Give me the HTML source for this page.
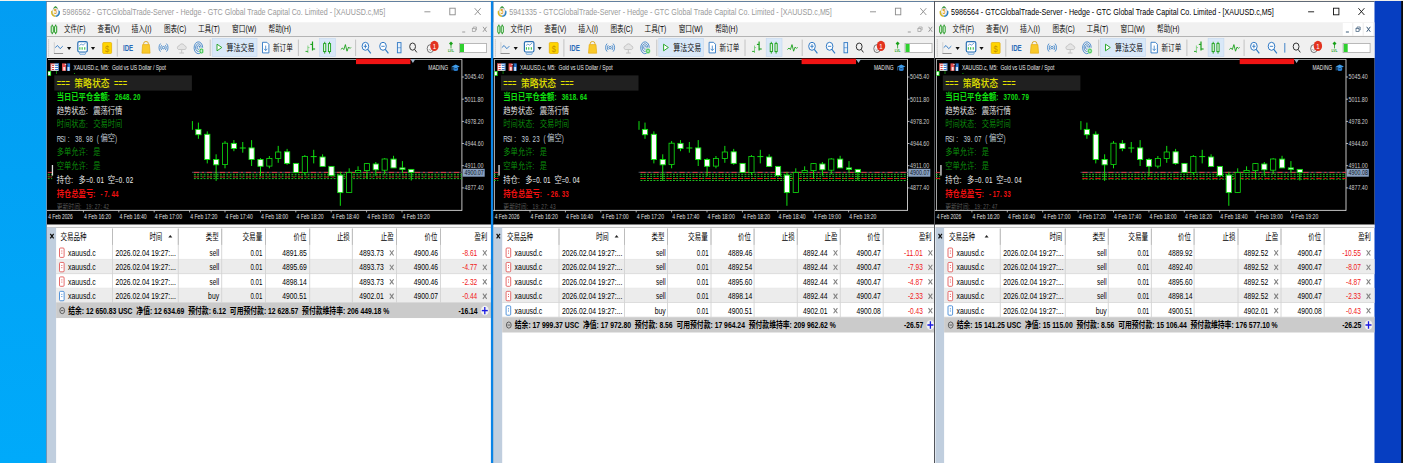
<!DOCTYPE html>
<html lang="zh-CN"><head><meta charset="utf-8"><title>MT5</title>
<style>
html,body{margin:0;padding:0;background:#0c41c4;overflow:hidden}
svg{display:block}
text{white-space:pre}
.u{font-family:"Liberation Sans","Noto Sans CJK SC",sans-serif}
.c{font-family:"Liberation Sans","Noto Sans CJK SC",sans-serif}
.p{font-family:"Liberation Sans","Noto Sans CJK SC",sans-serif}
</style></head><body>
<svg width="1403" height="463" viewBox="0 0 1403 463">
<defs><linearGradient id="dl" x1="0" y1="0" x2="0" y2="1"><stop offset="0" stop-color="#039df2"/><stop offset="1" stop-color="#00aafa"/></linearGradient></defs>
<rect x="0.00" y="0.00" width="60.00" height="463.00" fill="url(#dl)" />
<rect x="1370.00" y="0.00" width="40.00" height="463.00" fill="#063ec1" />
<rect x="1401.20" y="0.00" width="2.00" height="463.00" fill="#0c0c0c" />
<g clip-path="url(#c1)">
<clipPath id="c1"><rect x="45.4" y="0" width="445.60" height="463"/></clipPath>
<rect x="46.00" y="0.00" width="445.00" height="463.00" fill="#ffffff" />
<rect x="46.00" y="0.90" width="445.00" height="0.90" fill="#3d6288" />
<rect x="46.10" y="1.00" width="0.80" height="463.00" fill="#4a7aa4" />
<g transform="translate(51.00 5.90)"><path d="M2 3.4 C2.5 1.4 3.7 0.3 4.5 0 C5.3 0.3 6.5 1.4 7 3.4 L4.5 2.4Z" fill="#3f9a3f"/><path d="M0.2 5.2 C-0.5 8.8 1.6 11 4.4 11.2 L4.4 8.4 L2 4.4Z" fill="#d6ba1e"/><path d="M8.8 5.2 C9.5 8.8 7.4 11 4.6 11.2 L4.6 8.4 L7 4.4Z" fill="#1f80c8"/><ellipse cx="4.5" cy="5.9" rx="3" ry="3.7" fill="#fff" stroke="#a0a0a0" stroke-width="0.45"/><text class="u" x="0" y="0" font-size="6.6" font-weight="700" fill="#dc9c12" text-anchor="middle" transform="translate(4.5 8.25) scale(0.82 1)">5</text></g>
<text class="u" x="62.60" y="14.83" font-size="8.7" fill="#9a9a9a" textLength="322.60" lengthAdjust="spacingAndGlyphs" font-weight="350" >5986562 - GTCGlobalTrade-Server - Hedge - GTC Global Trade Capital Co. Limited - [XAUUSD.c,M5]</text>
<line x1="474.70" y1="8.20" x2="480.70" y2="15.00" stroke="#8a8a8a" stroke-width="0.9" />
<line x1="480.70" y1="8.20" x2="474.70" y2="15.00" stroke="#8a8a8a" stroke-width="0.9" />
<rect x="449.80" y="8.2" width="5.4" height="6.6" fill="none" stroke="#8a8a8a" stroke-width="0.9"/>
<line x1="424.40" y1="11.80" x2="430.40" y2="11.80" stroke="#8a8a8a" stroke-width="0.9" />
<rect x="47.00" y="22.30" width="444.00" height="14.00" fill="#f0f0f0" />
<rect x="47.00" y="36.00" width="444.00" height="1.00" fill="#b4b4b4" />
<line x1="52.25" y1="24.60" x2="52.25" y2="34.20" stroke="#109010" stroke-width="0.9" />
<rect x="51.20" y="26" width="2.1" height="6.8" rx="0.6" fill="#f4fff4" stroke="#109010" stroke-width="0.9"/>
<line x1="55.65" y1="24.60" x2="55.65" y2="34.20" stroke="#109010" stroke-width="0.9" />
<rect x="54.60" y="26" width="2.1" height="6.8" rx="0.6" fill="#f4fff4" stroke="#109010" stroke-width="0.9"/>
<text class="u" x="64.00" y="32.43" font-size="8.7" fill="#000" textLength="21.30" lengthAdjust="spacingAndGlyphs" font-weight="350" >文件(F)</text>
<text class="u" x="97.60" y="32.43" font-size="8.7" fill="#000" textLength="22.10" lengthAdjust="spacingAndGlyphs" font-weight="350" >查看(V)</text>
<text class="u" x="131.60" y="32.43" font-size="8.7" fill="#000" textLength="19.80" lengthAdjust="spacingAndGlyphs" font-weight="350" >插入(I)</text>
<text class="u" x="163.90" y="32.43" font-size="8.7" fill="#000" textLength="22.30" lengthAdjust="spacingAndGlyphs" font-weight="350" >图表(C)</text>
<text class="u" x="197.90" y="32.43" font-size="8.7" fill="#000" textLength="21.80" lengthAdjust="spacingAndGlyphs" font-weight="350" >工具(T)</text>
<text class="u" x="232.10" y="32.43" font-size="8.7" fill="#000" textLength="24.10" lengthAdjust="spacingAndGlyphs" font-weight="350" >窗口(W)</text>
<text class="u" x="268.60" y="32.43" font-size="8.7" fill="#000" textLength="22.40" lengthAdjust="spacingAndGlyphs" font-weight="350" >帮助(H)</text>
<line x1="462.20" y1="32.00" x2="465.20" y2="32.00" stroke="#9c9c9c" stroke-width="1" />
<rect x="472.30" y="28.4" width="3" height="3" fill="none" stroke="#9c9c9c" stroke-width="0.7"/>
<path d="M473.30 28.2 v-1.2 h3.2 v3 h-1" fill="none" stroke="#9c9c9c" stroke-width="0.7"/>
<line x1="483.00" y1="26.80" x2="486.60" y2="31.80" stroke="#9c9c9c" stroke-width="1" />
<line x1="486.60" y1="26.80" x2="483.00" y2="31.80" stroke="#9c9c9c" stroke-width="1" />
<rect x="47.00" y="37.00" width="444.00" height="21.00" fill="#f0f0f0" />
<rect x="48.30" y="39.50" width="0.80" height="0.90" fill="#9a9a9a" />
<rect x="48.30" y="41.50" width="0.80" height="0.90" fill="#9a9a9a" />
<rect x="48.30" y="43.50" width="0.80" height="0.90" fill="#9a9a9a" />
<rect x="48.30" y="45.50" width="0.80" height="0.90" fill="#9a9a9a" />
<rect x="48.30" y="47.50" width="0.80" height="0.90" fill="#9a9a9a" />
<rect x="48.30" y="49.50" width="0.80" height="0.90" fill="#9a9a9a" />
<rect x="48.30" y="51.50" width="0.80" height="0.90" fill="#9a9a9a" />
<rect x="48.30" y="53.50" width="0.80" height="0.90" fill="#9a9a9a" />
<rect x="48.30" y="55.50" width="0.80" height="0.90" fill="#9a9a9a" />
<line x1="54.30" y1="42.20" x2="54.30" y2="53.60" stroke="#cdcdcd" stroke-width="0.9" />
<line x1="54.00" y1="53.50" x2="63.10" y2="53.50" stroke="#858585" stroke-width="0.9" />
<path d="M55.20 47.6 l2.3 -2.1 l2.7 3.2 l2.6 -2.6" fill="none" stroke="#2f78c4" stroke-width="0.9"/>
<path d="M67.00 47.1 h4.2 l-2.1 2.9z" fill="#111"/>
<rect x="77.80" y="41.6" width="9.5" height="10.4" rx="1.5" fill="#fff" stroke="#2a70b4" stroke-width="1.2"/>
<path d="M79.40 45.6 l1.8 -1.5 l1.9 1 l2.6 -2.2" fill="none" stroke="#3a7cc0" stroke-width="0.7"/>
<rect x="79.30" y="47.20" width="1.10" height="2.50" fill="#38c048" />
<rect x="81.60" y="47.20" width="1.10" height="2.50" fill="#38c048" />
<rect x="84.20" y="47.20" width="1.10" height="2.50" fill="#38c048" />
<path d="M79.30 52.8 h6.5 l-0.7 1.6 h-5.1z" fill="#fff" stroke="#3a82c8" stroke-width="0.6"/>
<path d="M90.90 47.1 h4.2 l-2.1 2.9z" fill="#111"/>
<rect x="102.70" y="42.5" width="8.9" height="11" rx="1" fill="#ffd500" stroke="#e2aa00" stroke-width="0.7"/>
<text class="u" transform="translate(107.20 51.58) scale(0.8 1)" font-size="9.4" fill="#c49000" text-anchor="middle" font-weight="350" >$</text>
<line x1="117.30" y1="39.20" x2="117.30" y2="56.60" stroke="#bdbdbd" stroke-width="0.9" />
<text class="u" x="123.00" y="50.72" font-size="8.4" fill="#2a6ab8" textLength="10.20" lengthAdjust="spacingAndGlyphs" font-weight="700" >IDE</text>
<path d="M143.70 44.5 v-1.2 a2.3 1.8 0 0 1 4.6 0 v1.2" fill="none" stroke="#d79a00" stroke-width="0.8"/>
<path d="M142.60 44.6 h6.8 l0.7 8.6 h-8.2z" fill="#f9c92a" stroke="#e3a400" stroke-width="0.6"/>
<circle cx="163.50" cy="47.6" r="1.2" fill="none" stroke="#2f78c4" stroke-width="0.8"/>
<path d="M161.70 45.20 a2.25 3 0 0 0 0 4.80" fill="none" stroke="#2f78c4" stroke-width="0.8"/>
<path d="M165.30 45.20 a2.25 3 0 0 1 0 4.80" fill="none" stroke="#2f78c4" stroke-width="0.8"/>
<path d="M160.50 43.60 a3.75 5 0 0 0 0 8.00" fill="none" stroke="#2f78c4" stroke-width="0.8"/>
<path d="M166.50 43.60 a3.75 5 0 0 1 0 8.00" fill="none" stroke="#2f78c4" stroke-width="0.8"/>
<path d="M178.50 49.5 a2 2 0 0 1 0.8 -3.8 a2.8 3 0 0 1 5.2 0 a2 2 0 0 1 0.6 3.8z" fill="#e4e4e4" stroke="#b8b8b8" stroke-width="0.7"/>
<line x1="181.70" y1="50.00" x2="181.70" y2="52.80" stroke="#b8b8b8" stroke-width="0.8" />
<line x1="179.40" y1="53.00" x2="184.00" y2="53.00" stroke="#b8b8b8" stroke-width="0.8" />
<path d="M199.38 48.70 A1.30 1.79 0 1 1 199.70 47.70" fill="none" stroke="#2f78c4" stroke-width="0.8"/>
<path d="M200.50 50.20 A2.80 3.86 0 1 1 201.20 47.70" fill="none" stroke="#2f78c4" stroke-width="0.8"/>
<path d="M201.62 51.70 A4.30 5.93 0 1 1 202.70 47.70" fill="none" stroke="#2f78c4" stroke-width="0.8"/>
<ellipse cx="201.40" cy="51.00" rx="2.3" ry="2.8" fill="#2fbe3f" stroke="#fff" stroke-width="0.5"/>
<line x1="200.10" y1="51.00" x2="202.70" y2="51.00" stroke="#fff" stroke-width="0.7" />
<line x1="201.40" y1="49.40" x2="201.40" y2="52.60" stroke="#fff" stroke-width="0.7" />
<line x1="210.20" y1="39.60" x2="210.20" y2="56.00" stroke="#bdbdbd" stroke-width="0.9" />
<rect x="212.20" y="38.6" width="44.8" height="17.8" fill="#d9e8f8" stroke="#c2d8f0" stroke-width="0.6"/>
<path d="M217.00 44.2 v6.6 l4.8 -3.3z" fill="#fff" stroke="#18a018" stroke-width="0.9"/>
<text class="u" x="226.60" y="50.73" font-size="8.7" fill="#000" textLength="28.00" lengthAdjust="spacingAndGlyphs" font-weight="350" >算法交易</text>
<path d="M262.50 42.3 h4.4 l2 2 v8.6 h-6.4z" fill="#fff" stroke="#2f78c4" stroke-width="0.9"/>
<line x1="265.70" y1="45.60" x2="265.70" y2="50.40" stroke="#2f78c4" stroke-width="0.8" />
<path d="M264.10 48.8 l1.6 1.8 l1.6 -1.8" fill="none" stroke="#2f78c4" stroke-width="0.8"/>
<text class="u" x="273.00" y="50.73" font-size="8.7" fill="#000" textLength="19.80" lengthAdjust="spacingAndGlyphs" font-weight="350" >新订单</text>
<line x1="298.40" y1="39.60" x2="298.40" y2="56.00" stroke="#bdbdbd" stroke-width="0.9" />
<line x1="307.90" y1="45.50" x2="307.90" y2="53.00" stroke="#6fcc6f" stroke-width="0.8" />
<line x1="305.50" y1="51.40" x2="307.90" y2="51.40" stroke="#18a018" stroke-width="0.9" />
<line x1="307.90" y1="47.60" x2="309.50" y2="47.60" stroke="#6fcc6f" stroke-width="0.8" />
<line x1="312.50" y1="41.50" x2="312.50" y2="50.50" stroke="#18a018" stroke-width="1.2" />
<line x1="312.50" y1="49.00" x2="315.10" y2="49.00" stroke="#18a018" stroke-width="1.1" />
<line x1="310.30" y1="44.40" x2="312.50" y2="44.40" stroke="#18a018" stroke-width="1.1" />
<rect x="319.60" y="38.6" width="15.8" height="17.8" fill="#d9e8f8" stroke="#c2d8f0" stroke-width="0.6"/>
<line x1="324.70" y1="41.80" x2="324.70" y2="53.60" stroke="#18a018" stroke-width="0.9" />
<rect x="323.60" y="43.6" width="2.2" height="8" fill="#e6f6e6" stroke="#18a018" stroke-width="0.9"/>
<line x1="329.50" y1="41.80" x2="329.50" y2="53.60" stroke="#18a018" stroke-width="0.9" />
<rect x="328.40" y="43.6" width="2.2" height="8" fill="#e6f6e6" stroke="#18a018" stroke-width="0.9"/>
<path d="M340.80 49.5 l1.6 -1.5 l1.4 1.6 l1.6 -5 l1.6 6.6 l1.6 -4.2 l1.4 1.4 l1 -1" fill="none" stroke="#18a018" stroke-width="0.9"/>
<line x1="355.60" y1="39.60" x2="355.60" y2="56.00" stroke="#bdbdbd" stroke-width="0.9" />
<ellipse cx="365.40" cy="46.3" rx="3.3" ry="4" fill="#fff" stroke="#2f78c4" stroke-width="1"/>
<line x1="367.70" y1="49.30" x2="370.80" y2="53.30" stroke="#2f78c4" stroke-width="1.1" />
<line x1="363.70" y1="46.30" x2="367.10" y2="46.30" stroke="#2f78c4" stroke-width="0.9" />
<line x1="365.40" y1="44.20" x2="365.40" y2="48.40" stroke="#2f78c4" stroke-width="0.9" />
<ellipse cx="383.00" cy="46.3" rx="3.3" ry="4" fill="#fff" stroke="#2f78c4" stroke-width="1"/>
<line x1="385.30" y1="49.30" x2="388.40" y2="53.30" stroke="#2f78c4" stroke-width="1.1" />
<line x1="381.30" y1="46.30" x2="384.70" y2="46.30" stroke="#2f78c4" stroke-width="0.9" />
<rect x="397.40" y="42.6" width="3.6" height="10.2" fill="#e8f1fb" stroke="#2f78c4" stroke-width="0.9"/>
<line x1="397.40" y1="47.70" x2="401.00" y2="47.70" stroke="#2f78c4" stroke-width="0.6" />
<ellipse cx="412.60" cy="46.6" rx="2.9" ry="3.6" fill="none" stroke="#333" stroke-width="1"/>
<line x1="414.60" y1="49.40" x2="416.80" y2="52.40" stroke="#333" stroke-width="1" />
<ellipse cx="430.40" cy="48.6" rx="3.2" ry="4" fill="#f6f6f6" stroke="#555" stroke-width="0.8"/>
<path d="M428.80 49 l1.6 1.6 l1.8 -2.6" fill="none" stroke="#777" stroke-width="0.6"/>
<ellipse cx="434.40" cy="45.9" rx="4.2" ry="5.2" fill="#e2331f"/>
<text class="u" transform="translate(434.40 48.74) scale(0.8 1)" font-size="7.6" fill="#fff" text-anchor="middle" font-weight="350" >1</text>
<path d="M451.00 41.4 l2 2 l-2 2 l-2 -2z" fill="#18a018"/>
<line x1="451.00" y1="45.00" x2="451.00" y2="48.40" stroke="#18a018" stroke-width="0.8" />
<text class="u" transform="translate(451.00 52.30) scale(0.9 1)" font-size="3.6" fill="#18a018" text-anchor="middle" font-weight="700" >LVL</text>
<rect x="459.40" y="43.4" width="27" height="9.2" fill="#fff" stroke="#a9a9a9" stroke-width="0.8"/>
<rect x="460.00" y="44.00" width="4.00" height="8.00" fill="#2fd02f" />
<rect x="47.00" y="58.00" width="444.00" height="166.70" fill="#000" />
<rect x="48.00" y="59.05" width="413.90" height="0.90" fill="#a8a8a8" />
<line x1="461.90" y1="59.20" x2="461.90" y2="210.80" stroke="#d8d8d8" stroke-width="0.9" />
<line x1="47.00" y1="210.40" x2="461.90" y2="210.40" stroke="#d8d8d8" stroke-width="0.9" />
<line x1="461.90" y1="77.00" x2="463.90" y2="77.00" stroke="#d8d8d8" stroke-width="0.8" />
<text class="c" x="464.50" y="79.34" font-size="6.5" fill="#cccccc" textLength="19.10" lengthAdjust="spacingAndGlyphs" >5045.40</text>
<line x1="461.90" y1="99.20" x2="463.90" y2="99.20" stroke="#d8d8d8" stroke-width="0.8" />
<text class="c" x="464.50" y="101.54" font-size="6.5" fill="#cccccc" textLength="19.10" lengthAdjust="spacingAndGlyphs" >5011.80</text>
<line x1="461.90" y1="121.40" x2="463.90" y2="121.40" stroke="#d8d8d8" stroke-width="0.8" />
<text class="c" x="464.50" y="123.74" font-size="6.5" fill="#cccccc" textLength="19.10" lengthAdjust="spacingAndGlyphs" >4978.20</text>
<line x1="461.90" y1="143.50" x2="463.90" y2="143.50" stroke="#d8d8d8" stroke-width="0.8" />
<text class="c" x="464.50" y="145.84" font-size="6.5" fill="#cccccc" textLength="19.10" lengthAdjust="spacingAndGlyphs" >4944.60</text>
<line x1="461.90" y1="165.70" x2="463.90" y2="165.70" stroke="#d8d8d8" stroke-width="0.8" />
<text class="c" x="464.50" y="168.04" font-size="6.5" fill="#cccccc" textLength="19.10" lengthAdjust="spacingAndGlyphs" >4911.00</text>
<line x1="461.90" y1="187.90" x2="463.90" y2="187.90" stroke="#d8d8d8" stroke-width="0.8" />
<text class="c" x="464.50" y="190.24" font-size="6.5" fill="#cccccc" textLength="19.10" lengthAdjust="spacingAndGlyphs" >4877.40</text>
<text class="c" x="48.20" y="219.08" font-size="6.6" fill="#e0e0e0" textLength="24.60" lengthAdjust="spacingAndGlyphs" >4 Feb 2026</text>
<line x1="83.40" y1="210.40" x2="83.40" y2="212.40" stroke="#d8d8d8" stroke-width="0.8" />
<text class="c" x="84.00" y="219.08" font-size="6.6" fill="#e0e0e0" textLength="27.20" lengthAdjust="spacingAndGlyphs" >4 Feb 16:20</text>
<line x1="118.80" y1="210.40" x2="118.80" y2="212.40" stroke="#d8d8d8" stroke-width="0.8" />
<text class="c" x="119.40" y="219.08" font-size="6.6" fill="#e0e0e0" textLength="27.20" lengthAdjust="spacingAndGlyphs" >4 Feb 16:40</text>
<line x1="154.20" y1="210.40" x2="154.20" y2="212.40" stroke="#d8d8d8" stroke-width="0.8" />
<text class="c" x="154.80" y="219.08" font-size="6.6" fill="#e0e0e0" textLength="27.20" lengthAdjust="spacingAndGlyphs" >4 Feb 17:00</text>
<line x1="189.60" y1="210.40" x2="189.60" y2="212.40" stroke="#d8d8d8" stroke-width="0.8" />
<text class="c" x="190.20" y="219.08" font-size="6.6" fill="#e0e0e0" textLength="27.20" lengthAdjust="spacingAndGlyphs" >4 Feb 17:20</text>
<line x1="225.00" y1="210.40" x2="225.00" y2="212.40" stroke="#d8d8d8" stroke-width="0.8" />
<text class="c" x="225.60" y="219.08" font-size="6.6" fill="#e0e0e0" textLength="27.20" lengthAdjust="spacingAndGlyphs" >4 Feb 17:40</text>
<line x1="260.40" y1="210.40" x2="260.40" y2="212.40" stroke="#d8d8d8" stroke-width="0.8" />
<text class="c" x="261.00" y="219.08" font-size="6.6" fill="#e0e0e0" textLength="27.20" lengthAdjust="spacingAndGlyphs" >4 Feb 18:00</text>
<line x1="295.80" y1="210.40" x2="295.80" y2="212.40" stroke="#d8d8d8" stroke-width="0.8" />
<text class="c" x="296.40" y="219.08" font-size="6.6" fill="#e0e0e0" textLength="27.20" lengthAdjust="spacingAndGlyphs" >4 Feb 18:20</text>
<line x1="331.20" y1="210.40" x2="331.20" y2="212.40" stroke="#d8d8d8" stroke-width="0.8" />
<text class="c" x="331.80" y="219.08" font-size="6.6" fill="#e0e0e0" textLength="27.20" lengthAdjust="spacingAndGlyphs" >4 Feb 18:40</text>
<line x1="366.60" y1="210.40" x2="366.60" y2="212.40" stroke="#d8d8d8" stroke-width="0.8" />
<text class="c" x="367.20" y="219.08" font-size="6.6" fill="#e0e0e0" textLength="27.20" lengthAdjust="spacingAndGlyphs" >4 Feb 19:00</text>
<line x1="402.00" y1="210.40" x2="402.00" y2="212.40" stroke="#d8d8d8" stroke-width="0.8" />
<text class="c" x="402.60" y="219.08" font-size="6.6" fill="#e0e0e0" textLength="27.20" lengthAdjust="spacingAndGlyphs" >4 Feb 19:20</text>
<line x1="192.00" y1="172.40" x2="461.90" y2="172.40" stroke="#39434f" stroke-width="1.1" />
<line x1="193.90" y1="172.40" x2="461.90" y2="172.40" stroke="#e23c48" stroke-width="1" stroke-dasharray="5.2 2.7 2.2 2.9"/>
<line x1="193.90" y1="174.30" x2="461.90" y2="174.30" stroke="#22c022" stroke-width="1" stroke-dasharray="1.9 1.35"/>
<line x1="193.90" y1="176.20" x2="461.90" y2="176.20" stroke="#22c022" stroke-width="1" stroke-dasharray="1.9 1.35"/>
<line x1="193.90" y1="177.00" x2="461.90" y2="177.00" stroke="#a81c1c" stroke-width="1" stroke-dasharray="5.2 2.7 2.2 2.9"/>
<line x1="193.90" y1="178.60" x2="461.90" y2="178.60" stroke="#22c022" stroke-width="1" stroke-dasharray="1.9 1.35"/>
<line x1="47.80" y1="172.40" x2="52.20" y2="172.40" stroke="#e03c48" stroke-width="0.9" />
<line x1="47.80" y1="174.30" x2="52.20" y2="174.30" stroke="#22c022" stroke-width="0.9" stroke-dasharray="1.9 1.35"/>
<line x1="47.80" y1="176.20" x2="52.20" y2="176.20" stroke="#22c022" stroke-width="0.9" stroke-dasharray="1.9 1.35"/>
<line x1="47.80" y1="177.00" x2="52.20" y2="177.00" stroke="#a81c1c" stroke-width="0.9" />
<line x1="47.80" y1="178.60" x2="52.20" y2="178.60" stroke="#22c022" stroke-width="0.9" stroke-dasharray="1.9 1.35"/>
<rect x="51.80" y="165.00" width="1.30" height="10.60" fill="#e0e0e0" />
<line x1="192.40" y1="121.10" x2="192.40" y2="129.80" stroke="#10e010" stroke-width="1" />
<line x1="198.40" y1="122.60" x2="198.40" y2="138.80" stroke="#10e010" stroke-width="1" />
<rect x="195.80" y="129.40" width="5.2" height="5.30" fill="#fff" stroke="#10e010" stroke-width="0.9"/>
<line x1="207.27" y1="131.40" x2="207.27" y2="163.40" stroke="#10e010" stroke-width="1" />
<rect x="204.67" y="134.30" width="5.2" height="25.20" fill="#fff" stroke="#10e010" stroke-width="0.9"/>
<line x1="216.14" y1="154.30" x2="216.14" y2="180.90" stroke="#10e010" stroke-width="1" />
<rect x="213.54" y="159.50" width="5.2" height="5.30" fill="#fff" stroke="#10e010" stroke-width="0.9"/>
<line x1="225.01" y1="141.10" x2="225.01" y2="168.30" stroke="#10e010" stroke-width="1" />
<rect x="222.41" y="143.20" width="5.2" height="21.40" fill="#000" stroke="#10e010" stroke-width="0.8"/>
<line x1="233.88" y1="140.10" x2="233.88" y2="151.20" stroke="#10e010" stroke-width="1" />
<rect x="231.28" y="143.40" width="5.2" height="5.10" fill="#fff" stroke="#10e010" stroke-width="0.9"/>
<line x1="242.75" y1="142.00" x2="242.75" y2="152.70" stroke="#10e010" stroke-width="1" />
<line x1="239.75" y1="148.00" x2="245.75" y2="148.00" stroke="#10e010" stroke-width="1" />
<line x1="251.62" y1="140.10" x2="251.62" y2="166.00" stroke="#10e010" stroke-width="1" />
<rect x="249.02" y="147.90" width="5.2" height="11.60" fill="#fff" stroke="#10e010" stroke-width="0.9"/>
<line x1="260.49" y1="158.20" x2="260.49" y2="176.00" stroke="#10e010" stroke-width="1" />
<rect x="257.89" y="159.50" width="5.2" height="6.80" fill="#fff" stroke="#10e010" stroke-width="0.9"/>
<line x1="269.36" y1="156.00" x2="269.36" y2="168.30" stroke="#10e010" stroke-width="1" />
<rect x="266.76" y="158.40" width="5.2" height="7.70" fill="#000" stroke="#10e010" stroke-width="0.8"/>
<line x1="278.23" y1="145.90" x2="278.23" y2="162.80" stroke="#10e010" stroke-width="1" />
<rect x="275.63" y="152.00" width="5.2" height="6.40" fill="#000" stroke="#10e010" stroke-width="0.8"/>
<line x1="287.10" y1="148.90" x2="287.10" y2="164.80" stroke="#10e010" stroke-width="1" />
<rect x="284.50" y="151.80" width="5.2" height="11.60" fill="#fff" stroke="#10e010" stroke-width="0.9"/>
<line x1="295.97" y1="163.40" x2="295.97" y2="172.60" stroke="#10e010" stroke-width="1" />
<rect x="293.37" y="163.40" width="5.2" height="9.20" fill="#fff" stroke="#10e010" stroke-width="0.9"/>
<line x1="304.84" y1="155.10" x2="304.84" y2="175.10" stroke="#10e010" stroke-width="1" />
<rect x="302.24" y="156.40" width="5.2" height="16.00" fill="#000" stroke="#10e010" stroke-width="0.8"/>
<line x1="313.71" y1="149.80" x2="313.71" y2="163.40" stroke="#10e010" stroke-width="1" />
<line x1="310.71" y1="156.60" x2="316.71" y2="156.60" stroke="#10e010" stroke-width="1" />
<line x1="322.58" y1="154.30" x2="322.58" y2="166.40" stroke="#10e010" stroke-width="1" />
<rect x="319.98" y="157.00" width="5.2" height="9.40" fill="#fff" stroke="#10e010" stroke-width="0.9"/>
<line x1="331.45" y1="166.40" x2="331.45" y2="175.60" stroke="#10e010" stroke-width="1" />
<rect x="328.85" y="166.40" width="5.2" height="9.20" fill="#fff" stroke="#10e010" stroke-width="0.9"/>
<line x1="340.32" y1="171.80" x2="340.32" y2="205.80" stroke="#10e010" stroke-width="1" />
<rect x="337.72" y="175.10" width="5.2" height="17.50" fill="#fff" stroke="#10e010" stroke-width="0.9"/>
<line x1="349.19" y1="168.30" x2="349.19" y2="192.60" stroke="#10e010" stroke-width="1" />
<rect x="346.59" y="172.40" width="5.2" height="20.00" fill="#000" stroke="#10e010" stroke-width="0.8"/>
<line x1="358.06" y1="166.30" x2="358.06" y2="172.70" stroke="#10e010" stroke-width="1" />
<rect x="355.46" y="170.40" width="5.2" height="2.10" fill="#000" stroke="#10e010" stroke-width="0.8"/>
<line x1="366.93" y1="163.00" x2="366.93" y2="178.60" stroke="#10e010" stroke-width="1" />
<rect x="364.33" y="163.60" width="5.2" height="7.00" fill="#000" stroke="#10e010" stroke-width="0.8"/>
<line x1="375.80" y1="162.00" x2="375.80" y2="175.70" stroke="#10e010" stroke-width="1" />
<rect x="373.20" y="164.00" width="5.2" height="5.80" fill="#fff" stroke="#10e010" stroke-width="0.9"/>
<line x1="384.67" y1="158.20" x2="384.67" y2="174.30" stroke="#10e010" stroke-width="1" />
<rect x="382.07" y="159.00" width="5.2" height="11.20" fill="#000" stroke="#10e010" stroke-width="0.8"/>
<line x1="393.54" y1="155.80" x2="393.54" y2="167.90" stroke="#10e010" stroke-width="1" />
<rect x="390.94" y="159.10" width="5.2" height="8.80" fill="#fff" stroke="#10e010" stroke-width="0.9"/>
<line x1="402.41" y1="161.10" x2="402.41" y2="173.10" stroke="#10e010" stroke-width="1" />
<rect x="399.81" y="167.90" width="5.2" height="1.50" fill="#fff" stroke="#10e010" stroke-width="0.9"/>
<line x1="411.28" y1="169.40" x2="411.28" y2="180.50" stroke="#10e010" stroke-width="1" />
<rect x="408.68" y="169.40" width="5.2" height="3.00" fill="#fff" stroke="#10e010" stroke-width="0.9"/>
<rect x="462.70" y="168.80" width="22.00" height="7.90" fill="#8aa2c2" />
<text class="c" x="464.50" y="175.08" font-size="6.6" fill="#0c141e" textLength="19.30" lengthAdjust="spacingAndGlyphs" >4900.07</text>
<rect x="356.00" y="58.70" width="54.40" height="5.40" fill="#f01414" />
<path d="M410.50 59.2 h4.8 l-2.4 3.8z" fill="#9fb2c6"/>
<text class="c" x="428.30" y="69.80" font-size="6.4" fill="#e8e8e8" textLength="19.80" lengthAdjust="spacingAndGlyphs" >MADING</text>
<path d="M451.70 66.4 l4 -2 l4 2 l-4 2z" fill="#3f9be8"/>
<path d="M453.30 67.6 v2.2 a2.4 1.2 0 0 0 4.8 0 v-2.2 l-2.4 1.2z" fill="#2b7fd0"/>
<line x1="452.10" y1="66.60" x2="452.10" y2="70.40" stroke="#3f9be8" stroke-width="0.6" />
<rect x="50.50" y="63.40" width="8.30" height="7.40" fill="#fff" />
<rect x="50.50" y="63.40" width="0.70" height="7.40" fill="#b42020" />
<rect x="58.10" y="63.40" width="0.70" height="7.40" fill="#1d5fb0" />
<rect x="50.50" y="63.40" width="4.10" height="0.80" fill="#b42020" />
<rect x="54.60" y="63.40" width="4.20" height="0.80" fill="#1d5fb0" />
<rect x="52.00" y="64.90" width="2.20" height="1.00" fill="#e03c3c" />
<rect x="55.10" y="64.90" width="2.90" height="1.00" fill="#2f7ad0" />
<rect x="52.00" y="66.95" width="2.20" height="1.00" fill="#e03c3c" />
<rect x="55.10" y="66.95" width="2.90" height="1.00" fill="#2f7ad0" />
<rect x="52.00" y="69.00" width="2.20" height="1.00" fill="#e03c3c" />
<rect x="55.10" y="69.00" width="2.90" height="1.00" fill="#2f7ad0" />
<rect x="62.00" y="63.40" width="4.00" height="7.50" fill="#e25050" />
<rect x="63.20" y="67.00" width="2.00" height="3.50" fill="#fbdcdc" />
<rect x="66.80" y="63.40" width="3.30" height="7.50" fill="#2a7ad4" />
<rect x="67.60" y="67.00" width="1.90" height="3.90" fill="#cfe4fa" />
<rect x="64.80" y="64.10" width="2.60" height="0.90" fill="#e4e4e4" />
<rect x="66.20" y="63.40" width="1.40" height="3.20" fill="#0c1c3c" />
<text class="c" x="73.40" y="69.78" font-size="6.6" fill="#e8e8e8" textLength="92.60" lengthAdjust="spacingAndGlyphs" >XAUUSD.c, M5:  Gold vs US Dollar / Spot</text>
<rect x="47.90" y="71.00" width="3.20" height="4.90" fill="#16e016" />
<rect x="48.20" y="71.80" width="2.00" height="3.30" fill="#fff" />
<line x1="56.50" y1="71.00" x2="56.50" y2="74.00" stroke="#0a9a0a" stroke-width="0.8" />
<rect x="74.00" y="73.00" width="0.90" height="0.90" fill="#10c010" />
<rect x="54.30" y="75.40" width="137.60" height="15.20" fill="#202020" />
<text class="p" transform="translate(56.70 87.14) scale(0.63 1)" x="0.00 6.98 13.97" font-size="11.77" fill="#e0e000" font-weight="400">===</text>
<text class="p" x="74.30" y="86.72" font-size="10.6" fill="#e0e000" textLength="35.20" lengthAdjust="spacingAndGlyphs" font-weight="500" >策略状态</text>
<text class="p" transform="translate(113.90 87.14) scale(0.63 1)" x="0.00 6.98 13.97" font-size="11.77" fill="#e0e000" font-weight="400">===</text>
<text class="p" x="56.70" y="99.77" font-size="8.8" fill="#10e010" textLength="51.10" lengthAdjust="spacingAndGlyphs" font-weight="700" >当日已平仓金额</text>
<text class="p" transform="translate(107.80 100.12) scale(0.63 1)" x="0.00" font-size="9.77" fill="#10e010" font-weight="700">:</text>
<text class="p" transform="translate(115.10 100.12) scale(0.63 1)" x="0.00 5.79 11.59 17.38 23.17 28.97 34.76" font-size="9.77" fill="#10e010" font-weight="700">2648.20</text>
<text class="p" x="56.70" y="113.61" font-size="8.8" fill="#f4f4f4" textLength="29.20" lengthAdjust="spacingAndGlyphs" font-weight="350" >趋势状态</text>
<text class="p" transform="translate(85.90 113.96) scale(0.63 1)" x="0.00" font-size="9.77" fill="#f4f4f4">:</text>
<text class="p" x="93.20" y="113.61" font-size="8.8" fill="#f4f4f4" textLength="29.20" lengthAdjust="spacingAndGlyphs" font-weight="350" >震荡行情</text>
<text class="p" x="56.70" y="127.45" font-size="8.8" fill="#0c960c" textLength="29.20" lengthAdjust="spacingAndGlyphs" font-weight="350" >时间状态</text>
<text class="p" transform="translate(85.90 127.80) scale(0.63 1)" x="0.00" font-size="9.77" fill="#0c960c">:</text>
<text class="p" x="93.20" y="127.45" font-size="8.8" fill="#0c960c" textLength="29.20" lengthAdjust="spacingAndGlyphs" font-weight="350" >交易时间</text>
<text class="p" transform="translate(56.70 141.64) scale(0.63 1)" x="0.00 5.79 11.59 17.38" font-size="9.77" fill="#c4d0dc">RSI:</text>
<text class="p" transform="translate(74.95 141.64) scale(0.63 1)" x="0.00 5.79 11.59 17.38 23.17" font-size="9.77" fill="#c4d0dc">38.98</text>
<text class="p" transform="translate(96.85 141.64) scale(0.63 1)" x="0.00" font-size="9.77" fill="#c4d0dc">(</text>
<text class="p" x="100.50" y="141.29" font-size="8.8" fill="#c4d0dc" textLength="14.60" lengthAdjust="spacingAndGlyphs" font-weight="350" >偏空</text>
<text class="p" transform="translate(115.10 141.64) scale(0.63 1)" x="0.00" font-size="9.77" fill="#c4d0dc">)</text>
<text class="p" x="56.70" y="155.13" font-size="8.8" fill="#0c960c" textLength="29.20" lengthAdjust="spacingAndGlyphs" font-weight="350" >多单允许</text>
<text class="p" transform="translate(85.90 155.48) scale(0.63 1)" x="0.00" font-size="9.77" fill="#0c960c">:</text>
<text class="p" x="93.20" y="155.13" font-size="8.8" fill="#0c960c" textLength="7.30" lengthAdjust="spacingAndGlyphs" font-weight="350" >是</text>
<text class="p" x="56.70" y="168.97" font-size="8.8" fill="#0c960c" textLength="29.20" lengthAdjust="spacingAndGlyphs" font-weight="350" >空单允许</text>
<text class="p" transform="translate(85.90 169.32) scale(0.63 1)" x="0.00" font-size="9.77" fill="#0c960c">:</text>
<text class="p" x="93.20" y="168.97" font-size="8.8" fill="#0c960c" textLength="7.30" lengthAdjust="spacingAndGlyphs" font-weight="350" >是</text>
<text class="p" x="56.70" y="182.81" font-size="8.8" fill="#f4f4f4" textLength="14.60" lengthAdjust="spacingAndGlyphs" font-weight="350" >持仓</text>
<text class="p" transform="translate(71.30 183.16) scale(0.63 1)" x="0.00" font-size="9.77" fill="#f4f4f4">:</text>
<text class="p" x="78.60" y="182.81" font-size="8.8" fill="#f4f4f4" textLength="7.30" lengthAdjust="spacingAndGlyphs" font-weight="350" >多</text>
<text class="p" transform="translate(85.90 183.16) scale(0.63 1)" x="0.00 5.79 11.59 17.38 23.17" font-size="9.77" fill="#f4f4f4">=0.01</text>
<text class="p" x="107.80" y="182.81" font-size="8.8" fill="#f4f4f4" textLength="7.30" lengthAdjust="spacingAndGlyphs" font-weight="350" >空</text>
<text class="p" transform="translate(115.10 183.16) scale(0.63 1)" x="0.00 5.79 11.59 17.38 23.17" font-size="9.77" fill="#f4f4f4">=0.02</text>
<text class="p" x="56.70" y="196.65" font-size="8.8" fill="#f01010" textLength="36.50" lengthAdjust="spacingAndGlyphs" font-weight="700" >持仓总盈亏</text>
<text class="p" transform="translate(93.20 197.00) scale(0.63 1)" x="0.00" font-size="9.77" fill="#f01010" font-weight="700">:</text>
<text class="p" transform="translate(100.50 197.00) scale(0.63 1)" x="0.00 5.79 11.59 17.38 23.17" font-size="9.77" fill="#f01010" font-weight="700">-7.44</text>
<text class="p" x="56.70" y="208.57" font-size="6.8" fill="#5c5c5c" textLength="23.36" lengthAdjust="spacingAndGlyphs" font-weight="350" >更新时间</text>
<text class="p" transform="translate(80.06 208.84) scale(0.63 1)" x="0.00" font-size="7.55" fill="#5c5c5c">:</text>
<text class="p" transform="translate(85.90 208.84) scale(0.63 1)" x="0.00 4.63 9.27 13.90 18.54 23.17 27.81 32.44" font-size="7.55" fill="#5c5c5c">19:27:42</text>
<rect x="47.00" y="224.70" width="444.00" height="3.00" fill="#f7f7f7" />
<rect x="47.00" y="227.10" width="444.00" height="0.80" fill="#b6b6b6" />
<rect x="47.00" y="227.60" width="9.10" height="235.40" fill="#c0cede" />
<line x1="50.25" y1="233.90" x2="53.65" y2="238.30" stroke="#111" stroke-width="1.2" />
<line x1="53.65" y1="233.90" x2="50.25" y2="238.30" stroke="#111" stroke-width="1.2" />
<rect x="56.10" y="258.95" width="434.90" height="0.70" fill="#d4d4d4" />
<rect x="56.10" y="259.35" width="434.90" height="14.45" fill="#ececec" />
<rect x="56.10" y="273.40" width="434.90" height="0.70" fill="#d4d4d4" />
<rect x="56.10" y="287.85" width="434.90" height="0.70" fill="#d4d4d4" />
<rect x="56.10" y="288.25" width="434.90" height="14.45" fill="#ececec" />
<rect x="56.10" y="302.30" width="434.90" height="0.70" fill="#d4d4d4" />
<rect x="56.10" y="302.80" width="434.90" height="15.25" fill="#cbcbcb" />
<line x1="112.50" y1="228.60" x2="112.50" y2="302.70" stroke="#d4d4d4" stroke-width="0.9" />
<line x1="112.50" y1="228.60" x2="112.50" y2="244.90" stroke="#b9b9b9" stroke-width="0.9" />
<line x1="178.30" y1="228.60" x2="178.30" y2="302.70" stroke="#d4d4d4" stroke-width="0.9" />
<line x1="178.30" y1="228.60" x2="178.30" y2="244.90" stroke="#b9b9b9" stroke-width="0.9" />
<line x1="221.70" y1="228.60" x2="221.70" y2="302.70" stroke="#d4d4d4" stroke-width="0.9" />
<line x1="221.70" y1="228.60" x2="221.70" y2="244.90" stroke="#b9b9b9" stroke-width="0.9" />
<line x1="265.50" y1="228.60" x2="265.50" y2="302.70" stroke="#d4d4d4" stroke-width="0.9" />
<line x1="265.50" y1="228.60" x2="265.50" y2="244.90" stroke="#b9b9b9" stroke-width="0.9" />
<line x1="309.70" y1="228.60" x2="309.70" y2="302.70" stroke="#d4d4d4" stroke-width="0.9" />
<line x1="309.70" y1="228.60" x2="309.70" y2="244.90" stroke="#b9b9b9" stroke-width="0.9" />
<line x1="352.40" y1="228.60" x2="352.40" y2="302.70" stroke="#d4d4d4" stroke-width="0.9" />
<line x1="352.40" y1="228.60" x2="352.40" y2="244.90" stroke="#b9b9b9" stroke-width="0.9" />
<line x1="396.50" y1="228.60" x2="396.50" y2="302.70" stroke="#d4d4d4" stroke-width="0.9" />
<line x1="396.50" y1="228.60" x2="396.50" y2="244.90" stroke="#b9b9b9" stroke-width="0.9" />
<line x1="440.50" y1="228.60" x2="440.50" y2="302.70" stroke="#d4d4d4" stroke-width="0.9" />
<line x1="440.50" y1="228.60" x2="440.50" y2="244.90" stroke="#b9b9b9" stroke-width="0.9" />
<text class="u" x="60.40" y="239.53" font-size="8.7" fill="#000" textLength="26.00" lengthAdjust="spacingAndGlyphs" font-weight="400" >交易品种</text>
<path d="M168.30 237.6 h4 l-2 -2.6z" fill="#222"/>
<text class="u" x="162.30" y="239.53" font-size="8.7" fill="#000" textLength="12.90" lengthAdjust="spacingAndGlyphs" text-anchor="end" font-weight="400" >时间</text>
<text class="u" x="218.70" y="239.53" font-size="8.7" fill="#000" textLength="12.90" lengthAdjust="spacingAndGlyphs" text-anchor="end" font-weight="400" >类型</text>
<text class="u" x="262.30" y="239.53" font-size="8.7" fill="#000" textLength="19.90" lengthAdjust="spacingAndGlyphs" text-anchor="end" font-weight="400" >交易量</text>
<text class="u" x="306.50" y="239.53" font-size="8.7" fill="#000" textLength="12.90" lengthAdjust="spacingAndGlyphs" text-anchor="end" font-weight="400" >价位</text>
<text class="u" x="349.80" y="239.53" font-size="8.7" fill="#000" textLength="12.90" lengthAdjust="spacingAndGlyphs" text-anchor="end" font-weight="400" >止损</text>
<text class="u" x="393.60" y="239.53" font-size="8.7" fill="#000" textLength="12.90" lengthAdjust="spacingAndGlyphs" text-anchor="end" font-weight="400" >止盈</text>
<text class="u" x="437.50" y="239.53" font-size="8.7" fill="#000" textLength="12.90" lengthAdjust="spacingAndGlyphs" text-anchor="end" font-weight="400" >价位</text>
<text class="u" x="487.20" y="239.53" font-size="8.7" fill="#000" textLength="12.60" lengthAdjust="spacingAndGlyphs" text-anchor="end" font-weight="400" >盈利</text>
<rect x="59.50" y="248.00" width="4.6" height="9.4" rx="1" fill="#fff" stroke="#e04848" stroke-width="0.8"/>
<rect x="61.40" y="250.50" width="0.90" height="1.00" fill="#e04848" />
<rect x="61.40" y="252.70" width="0.90" height="1.00" fill="#e04848" />
<text class="u" x="68.00" y="256.03" font-size="8.7" fill="#000" textLength="27.60" lengthAdjust="spacingAndGlyphs" font-weight="400" >xauusd.c</text>
<text class="u" x="115.50" y="256.03" font-size="8.7" fill="#000" textLength="60.30" lengthAdjust="spacingAndGlyphs" font-weight="400" >2026.02.04 19:27:...</text>
<text class="u" x="219.10" y="256.03" font-size="8.7" fill="#000" textLength="9.60" lengthAdjust="spacingAndGlyphs" text-anchor="end" font-weight="400" >sell</text>
<text class="u" x="262.30" y="256.03" font-size="8.7" fill="#000" textLength="11.80" lengthAdjust="spacingAndGlyphs" text-anchor="end" font-weight="400" >0.01</text>
<text class="u" x="306.70" y="256.03" font-size="8.7" fill="#000" textLength="24.40" lengthAdjust="spacingAndGlyphs" text-anchor="end" font-weight="400" >4891.85</text>
<text class="u" x="383.70" y="256.03" font-size="8.7" fill="#000" textLength="24.40" lengthAdjust="spacingAndGlyphs" text-anchor="end" font-weight="400" >4893.73</text>
<line x1="389.80" y1="250.30" x2="393.60" y2="255.50" stroke="#808080" stroke-width="1.05" />
<line x1="393.60" y1="250.30" x2="389.80" y2="255.50" stroke="#808080" stroke-width="1.05" />
<text class="u" x="438.10" y="256.03" font-size="8.7" fill="#000" textLength="24.40" lengthAdjust="spacingAndGlyphs" text-anchor="end" font-weight="400" >4900.46</text>
<text class="u" x="477.20" y="256.03" font-size="8.7" fill="#f01818" textLength="14.90" lengthAdjust="spacingAndGlyphs" text-anchor="end" font-weight="400" >-8.61</text>
<line x1="482.90" y1="250.30" x2="486.70" y2="255.50" stroke="#808080" stroke-width="1.05" />
<line x1="486.70" y1="250.30" x2="482.90" y2="255.50" stroke="#808080" stroke-width="1.05" />
<rect x="59.50" y="262.45" width="4.6" height="9.4" rx="1" fill="#fff" stroke="#e04848" stroke-width="0.8"/>
<rect x="61.40" y="264.95" width="0.90" height="1.00" fill="#e04848" />
<rect x="61.40" y="267.15" width="0.90" height="1.00" fill="#e04848" />
<text class="u" x="68.00" y="270.48" font-size="8.7" fill="#000" textLength="27.60" lengthAdjust="spacingAndGlyphs" font-weight="400" >xauusd.c</text>
<text class="u" x="115.50" y="270.48" font-size="8.7" fill="#000" textLength="60.30" lengthAdjust="spacingAndGlyphs" font-weight="400" >2026.02.04 19:27:...</text>
<text class="u" x="219.10" y="270.48" font-size="8.7" fill="#000" textLength="9.60" lengthAdjust="spacingAndGlyphs" text-anchor="end" font-weight="400" >sell</text>
<text class="u" x="262.30" y="270.48" font-size="8.7" fill="#000" textLength="11.80" lengthAdjust="spacingAndGlyphs" text-anchor="end" font-weight="400" >0.01</text>
<text class="u" x="306.70" y="270.48" font-size="8.7" fill="#000" textLength="24.40" lengthAdjust="spacingAndGlyphs" text-anchor="end" font-weight="400" >4895.69</text>
<text class="u" x="383.70" y="270.48" font-size="8.7" fill="#000" textLength="24.40" lengthAdjust="spacingAndGlyphs" text-anchor="end" font-weight="400" >4893.73</text>
<line x1="389.80" y1="264.75" x2="393.60" y2="269.95" stroke="#808080" stroke-width="1.05" />
<line x1="393.60" y1="264.75" x2="389.80" y2="269.95" stroke="#808080" stroke-width="1.05" />
<text class="u" x="438.10" y="270.48" font-size="8.7" fill="#000" textLength="24.40" lengthAdjust="spacingAndGlyphs" text-anchor="end" font-weight="400" >4900.46</text>
<text class="u" x="477.20" y="270.48" font-size="8.7" fill="#f01818" textLength="14.90" lengthAdjust="spacingAndGlyphs" text-anchor="end" font-weight="400" >-4.77</text>
<line x1="482.90" y1="264.75" x2="486.70" y2="269.95" stroke="#808080" stroke-width="1.05" />
<line x1="486.70" y1="264.75" x2="482.90" y2="269.95" stroke="#808080" stroke-width="1.05" />
<rect x="59.50" y="276.90" width="4.6" height="9.4" rx="1" fill="#fff" stroke="#e04848" stroke-width="0.8"/>
<rect x="61.40" y="279.40" width="0.90" height="1.00" fill="#e04848" />
<rect x="61.40" y="281.60" width="0.90" height="1.00" fill="#e04848" />
<text class="u" x="68.00" y="284.93" font-size="8.7" fill="#000" textLength="27.60" lengthAdjust="spacingAndGlyphs" font-weight="400" >xauusd.c</text>
<text class="u" x="115.50" y="284.93" font-size="8.7" fill="#000" textLength="60.30" lengthAdjust="spacingAndGlyphs" font-weight="400" >2026.02.04 19:27:...</text>
<text class="u" x="219.10" y="284.93" font-size="8.7" fill="#000" textLength="9.60" lengthAdjust="spacingAndGlyphs" text-anchor="end" font-weight="400" >sell</text>
<text class="u" x="262.30" y="284.93" font-size="8.7" fill="#000" textLength="11.80" lengthAdjust="spacingAndGlyphs" text-anchor="end" font-weight="400" >0.01</text>
<text class="u" x="306.70" y="284.93" font-size="8.7" fill="#000" textLength="24.40" lengthAdjust="spacingAndGlyphs" text-anchor="end" font-weight="400" >4898.14</text>
<text class="u" x="383.70" y="284.93" font-size="8.7" fill="#000" textLength="24.40" lengthAdjust="spacingAndGlyphs" text-anchor="end" font-weight="400" >4893.73</text>
<line x1="389.80" y1="279.20" x2="393.60" y2="284.40" stroke="#808080" stroke-width="1.05" />
<line x1="393.60" y1="279.20" x2="389.80" y2="284.40" stroke="#808080" stroke-width="1.05" />
<text class="u" x="438.10" y="284.93" font-size="8.7" fill="#000" textLength="24.40" lengthAdjust="spacingAndGlyphs" text-anchor="end" font-weight="400" >4900.46</text>
<text class="u" x="477.20" y="284.93" font-size="8.7" fill="#f01818" textLength="14.90" lengthAdjust="spacingAndGlyphs" text-anchor="end" font-weight="400" >-2.32</text>
<line x1="482.90" y1="279.20" x2="486.70" y2="284.40" stroke="#808080" stroke-width="1.05" />
<line x1="486.70" y1="279.20" x2="482.90" y2="284.40" stroke="#808080" stroke-width="1.05" />
<rect x="59.50" y="291.35" width="4.6" height="9.4" rx="1" fill="#fff" stroke="#2c7bd0" stroke-width="0.8"/>
<rect x="61.40" y="293.85" width="0.90" height="1.00" fill="#2c7bd0" />
<rect x="61.40" y="296.05" width="0.90" height="1.00" fill="#2c7bd0" />
<text class="u" x="68.00" y="299.38" font-size="8.7" fill="#000" textLength="27.60" lengthAdjust="spacingAndGlyphs" font-weight="400" >xauusd.c</text>
<text class="u" x="115.50" y="299.38" font-size="8.7" fill="#000" textLength="60.30" lengthAdjust="spacingAndGlyphs" font-weight="400" >2026.02.04 19:27:...</text>
<text class="u" x="219.10" y="299.38" font-size="8.7" fill="#000" textLength="11.00" lengthAdjust="spacingAndGlyphs" text-anchor="end" font-weight="400" >buy</text>
<text class="u" x="262.30" y="299.38" font-size="8.7" fill="#000" textLength="11.80" lengthAdjust="spacingAndGlyphs" text-anchor="end" font-weight="400" >0.01</text>
<text class="u" x="306.70" y="299.38" font-size="8.7" fill="#000" textLength="24.40" lengthAdjust="spacingAndGlyphs" text-anchor="end" font-weight="400" >4900.51</text>
<text class="u" x="383.70" y="299.38" font-size="8.7" fill="#000" textLength="24.40" lengthAdjust="spacingAndGlyphs" text-anchor="end" font-weight="400" >4902.01</text>
<line x1="389.80" y1="293.65" x2="393.60" y2="298.85" stroke="#808080" stroke-width="1.05" />
<line x1="393.60" y1="293.65" x2="389.80" y2="298.85" stroke="#808080" stroke-width="1.05" />
<text class="u" x="438.10" y="299.38" font-size="8.7" fill="#000" textLength="24.40" lengthAdjust="spacingAndGlyphs" text-anchor="end" font-weight="400" >4900.07</text>
<text class="u" x="477.20" y="299.38" font-size="8.7" fill="#f01818" textLength="14.90" lengthAdjust="spacingAndGlyphs" text-anchor="end" font-weight="400" >-0.44</text>
<line x1="482.90" y1="293.65" x2="486.70" y2="298.85" stroke="#808080" stroke-width="1.05" />
<line x1="486.70" y1="293.65" x2="482.90" y2="298.85" stroke="#808080" stroke-width="1.05" />
<ellipse cx="62.20" cy="310.60" rx="2.4" ry="3.1" fill="none" stroke="#333" stroke-width="0.7"/>
<line x1="60.90" y1="310.60" x2="63.50" y2="310.60" stroke="#333" stroke-width="0.7" />
<text class="u" x="68.20" y="313.73" font-size="8.7" fill="#000" textLength="321.00" lengthAdjust="spacingAndGlyphs" font-weight="700" >结余: 12 650.83 USC  净值: 12 634.69  预付款: 6.12  可用预付款: 12 628.57  预付款维持率: 206 449.18 %</text>
<text class="u" x="477.60" y="313.73" font-size="8.7" fill="#000" textLength="19.10" lengthAdjust="spacingAndGlyphs" text-anchor="end" font-weight="700" >-16.14</text>
<ellipse cx="484.80" cy="310.60" rx="3.9" ry="4.9" fill="#f2f2f2"/>
<line x1="481.80" y1="310.60" x2="487.80" y2="310.60" stroke="#1a1ae0" stroke-width="1.4" />
<line x1="484.80" y1="306.90" x2="484.80" y2="314.30" stroke="#1a1ae0" stroke-width="1.3" />
</g>
<g clip-path="url(#c2)">
<clipPath id="c2"><rect x="492.0" y="0" width="442.20" height="463"/></clipPath>
<rect x="492.60" y="0.00" width="444.00" height="463.00" fill="#ffffff" />
<rect x="492.60" y="0.90" width="444.00" height="0.90" fill="#3d6288" />
<rect x="492.70" y="1.00" width="0.80" height="463.00" fill="#4a7aa4" />
<g transform="translate(497.60 5.90)"><path d="M2 3.4 C2.5 1.4 3.7 0.3 4.5 0 C5.3 0.3 6.5 1.4 7 3.4 L4.5 2.4Z" fill="#3f9a3f"/><path d="M0.2 5.2 C-0.5 8.8 1.6 11 4.4 11.2 L4.4 8.4 L2 4.4Z" fill="#d6ba1e"/><path d="M8.8 5.2 C9.5 8.8 7.4 11 4.6 11.2 L4.6 8.4 L7 4.4Z" fill="#1f80c8"/><ellipse cx="4.5" cy="5.9" rx="3" ry="3.7" fill="#fff" stroke="#a0a0a0" stroke-width="0.45"/><text class="u" x="0" y="0" font-size="6.6" font-weight="700" fill="#dc9c12" text-anchor="middle" transform="translate(4.5 8.25) scale(0.82 1)">5</text></g>
<text class="u" x="509.20" y="14.83" font-size="8.7" fill="#9a9a9a" textLength="322.60" lengthAdjust="spacingAndGlyphs" font-weight="350" >5941335 - GTCGlobalTrade-Server - Hedge - GTC Global Trade Capital Co. Limited - [XAUUSD.c,M5]</text>
<line x1="920.30" y1="8.20" x2="926.30" y2="15.00" stroke="#8a8a8a" stroke-width="0.9" />
<line x1="926.30" y1="8.20" x2="920.30" y2="15.00" stroke="#8a8a8a" stroke-width="0.9" />
<rect x="895.40" y="8.2" width="5.4" height="6.6" fill="none" stroke="#8a8a8a" stroke-width="0.9"/>
<line x1="870.00" y1="11.80" x2="876.00" y2="11.80" stroke="#8a8a8a" stroke-width="0.9" />
<rect x="493.60" y="22.30" width="443.00" height="14.00" fill="#f0f0f0" />
<rect x="493.60" y="36.00" width="443.00" height="1.00" fill="#b4b4b4" />
<line x1="498.85" y1="24.60" x2="498.85" y2="34.20" stroke="#109010" stroke-width="0.9" />
<rect x="497.80" y="26" width="2.1" height="6.8" rx="0.6" fill="#f4fff4" stroke="#109010" stroke-width="0.9"/>
<line x1="502.25" y1="24.60" x2="502.25" y2="34.20" stroke="#109010" stroke-width="0.9" />
<rect x="501.20" y="26" width="2.1" height="6.8" rx="0.6" fill="#f4fff4" stroke="#109010" stroke-width="0.9"/>
<text class="u" x="510.60" y="32.43" font-size="8.7" fill="#000" textLength="21.30" lengthAdjust="spacingAndGlyphs" font-weight="350" >文件(F)</text>
<text class="u" x="544.20" y="32.43" font-size="8.7" fill="#000" textLength="22.10" lengthAdjust="spacingAndGlyphs" font-weight="350" >查看(V)</text>
<text class="u" x="578.20" y="32.43" font-size="8.7" fill="#000" textLength="19.80" lengthAdjust="spacingAndGlyphs" font-weight="350" >插入(I)</text>
<text class="u" x="610.50" y="32.43" font-size="8.7" fill="#000" textLength="22.30" lengthAdjust="spacingAndGlyphs" font-weight="350" >图表(C)</text>
<text class="u" x="644.50" y="32.43" font-size="8.7" fill="#000" textLength="21.80" lengthAdjust="spacingAndGlyphs" font-weight="350" >工具(T)</text>
<text class="u" x="678.70" y="32.43" font-size="8.7" fill="#000" textLength="24.10" lengthAdjust="spacingAndGlyphs" font-weight="350" >窗口(W)</text>
<text class="u" x="715.20" y="32.43" font-size="8.7" fill="#000" textLength="22.40" lengthAdjust="spacingAndGlyphs" font-weight="350" >帮助(H)</text>
<line x1="907.80" y1="32.00" x2="910.80" y2="32.00" stroke="#9c9c9c" stroke-width="1" />
<rect x="917.90" y="28.4" width="3" height="3" fill="none" stroke="#9c9c9c" stroke-width="0.7"/>
<path d="M918.90 28.2 v-1.2 h3.2 v3 h-1" fill="none" stroke="#9c9c9c" stroke-width="0.7"/>
<line x1="928.60" y1="26.80" x2="932.20" y2="31.80" stroke="#9c9c9c" stroke-width="1" />
<line x1="932.20" y1="26.80" x2="928.60" y2="31.80" stroke="#9c9c9c" stroke-width="1" />
<rect x="493.60" y="37.00" width="443.00" height="21.00" fill="#f0f0f0" />
<rect x="494.90" y="39.50" width="0.80" height="0.90" fill="#9a9a9a" />
<rect x="494.90" y="41.50" width="0.80" height="0.90" fill="#9a9a9a" />
<rect x="494.90" y="43.50" width="0.80" height="0.90" fill="#9a9a9a" />
<rect x="494.90" y="45.50" width="0.80" height="0.90" fill="#9a9a9a" />
<rect x="494.90" y="47.50" width="0.80" height="0.90" fill="#9a9a9a" />
<rect x="494.90" y="49.50" width="0.80" height="0.90" fill="#9a9a9a" />
<rect x="494.90" y="51.50" width="0.80" height="0.90" fill="#9a9a9a" />
<rect x="494.90" y="53.50" width="0.80" height="0.90" fill="#9a9a9a" />
<rect x="494.90" y="55.50" width="0.80" height="0.90" fill="#9a9a9a" />
<line x1="500.90" y1="42.20" x2="500.90" y2="53.60" stroke="#cdcdcd" stroke-width="0.9" />
<line x1="500.60" y1="53.50" x2="509.70" y2="53.50" stroke="#858585" stroke-width="0.9" />
<path d="M501.80 47.6 l2.3 -2.1 l2.7 3.2 l2.6 -2.6" fill="none" stroke="#2f78c4" stroke-width="0.9"/>
<path d="M513.60 47.1 h4.2 l-2.1 2.9z" fill="#111"/>
<rect x="524.40" y="41.6" width="9.5" height="10.4" rx="1.5" fill="#fff" stroke="#2a70b4" stroke-width="1.2"/>
<path d="M526.00 45.6 l1.8 -1.5 l1.9 1 l2.6 -2.2" fill="none" stroke="#3a7cc0" stroke-width="0.7"/>
<rect x="525.90" y="47.20" width="1.10" height="2.50" fill="#38c048" />
<rect x="528.20" y="47.20" width="1.10" height="2.50" fill="#38c048" />
<rect x="530.80" y="47.20" width="1.10" height="2.50" fill="#38c048" />
<path d="M525.90 52.8 h6.5 l-0.7 1.6 h-5.1z" fill="#fff" stroke="#3a82c8" stroke-width="0.6"/>
<path d="M537.50 47.1 h4.2 l-2.1 2.9z" fill="#111"/>
<rect x="549.30" y="42.5" width="8.9" height="11" rx="1" fill="#ffd500" stroke="#e2aa00" stroke-width="0.7"/>
<text class="u" transform="translate(553.80 51.58) scale(0.8 1)" font-size="9.4" fill="#c49000" text-anchor="middle" font-weight="350" >$</text>
<line x1="563.90" y1="39.20" x2="563.90" y2="56.60" stroke="#bdbdbd" stroke-width="0.9" />
<text class="u" x="569.60" y="50.72" font-size="8.4" fill="#2a6ab8" textLength="10.20" lengthAdjust="spacingAndGlyphs" font-weight="700" >IDE</text>
<path d="M590.30 44.5 v-1.2 a2.3 1.8 0 0 1 4.6 0 v1.2" fill="none" stroke="#d79a00" stroke-width="0.8"/>
<path d="M589.20 44.6 h6.8 l0.7 8.6 h-8.2z" fill="#f9c92a" stroke="#e3a400" stroke-width="0.6"/>
<circle cx="610.10" cy="47.6" r="1.2" fill="none" stroke="#2f78c4" stroke-width="0.8"/>
<path d="M608.30 45.20 a2.25 3 0 0 0 0 4.80" fill="none" stroke="#2f78c4" stroke-width="0.8"/>
<path d="M611.90 45.20 a2.25 3 0 0 1 0 4.80" fill="none" stroke="#2f78c4" stroke-width="0.8"/>
<path d="M607.10 43.60 a3.75 5 0 0 0 0 8.00" fill="none" stroke="#2f78c4" stroke-width="0.8"/>
<path d="M613.10 43.60 a3.75 5 0 0 1 0 8.00" fill="none" stroke="#2f78c4" stroke-width="0.8"/>
<path d="M625.10 49.5 a2 2 0 0 1 0.8 -3.8 a2.8 3 0 0 1 5.2 0 a2 2 0 0 1 0.6 3.8z" fill="#e4e4e4" stroke="#b8b8b8" stroke-width="0.7"/>
<line x1="628.30" y1="50.00" x2="628.30" y2="52.80" stroke="#b8b8b8" stroke-width="0.8" />
<line x1="626.00" y1="53.00" x2="630.60" y2="53.00" stroke="#b8b8b8" stroke-width="0.8" />
<path d="M645.98 48.70 A1.30 1.79 0 1 1 646.30 47.70" fill="none" stroke="#2f78c4" stroke-width="0.8"/>
<path d="M647.10 50.20 A2.80 3.86 0 1 1 647.80 47.70" fill="none" stroke="#2f78c4" stroke-width="0.8"/>
<path d="M648.23 51.70 A4.30 5.93 0 1 1 649.30 47.70" fill="none" stroke="#2f78c4" stroke-width="0.8"/>
<ellipse cx="648.00" cy="51.00" rx="2.3" ry="2.8" fill="#2fbe3f" stroke="#fff" stroke-width="0.5"/>
<line x1="646.70" y1="51.00" x2="649.30" y2="51.00" stroke="#fff" stroke-width="0.7" />
<line x1="648.00" y1="49.40" x2="648.00" y2="52.60" stroke="#fff" stroke-width="0.7" />
<line x1="656.80" y1="39.60" x2="656.80" y2="56.00" stroke="#bdbdbd" stroke-width="0.9" />
<rect x="658.80" y="38.6" width="44.8" height="17.8" fill="#d9e8f8" stroke="#c2d8f0" stroke-width="0.6"/>
<path d="M663.60 44.2 v6.6 l4.8 -3.3z" fill="#fff" stroke="#18a018" stroke-width="0.9"/>
<text class="u" x="673.20" y="50.73" font-size="8.7" fill="#000" textLength="28.00" lengthAdjust="spacingAndGlyphs" font-weight="350" >算法交易</text>
<path d="M709.10 42.3 h4.4 l2 2 v8.6 h-6.4z" fill="#fff" stroke="#2f78c4" stroke-width="0.9"/>
<line x1="712.30" y1="45.60" x2="712.30" y2="50.40" stroke="#2f78c4" stroke-width="0.8" />
<path d="M710.70 48.8 l1.6 1.8 l1.6 -1.8" fill="none" stroke="#2f78c4" stroke-width="0.8"/>
<text class="u" x="719.60" y="50.73" font-size="8.7" fill="#000" textLength="19.80" lengthAdjust="spacingAndGlyphs" font-weight="350" >新订单</text>
<line x1="745.00" y1="39.60" x2="745.00" y2="56.00" stroke="#bdbdbd" stroke-width="0.9" />
<line x1="754.50" y1="45.50" x2="754.50" y2="53.00" stroke="#6fcc6f" stroke-width="0.8" />
<line x1="752.10" y1="51.40" x2="754.50" y2="51.40" stroke="#18a018" stroke-width="0.9" />
<line x1="754.50" y1="47.60" x2="756.10" y2="47.60" stroke="#6fcc6f" stroke-width="0.8" />
<line x1="759.10" y1="41.50" x2="759.10" y2="50.50" stroke="#18a018" stroke-width="1.2" />
<line x1="759.10" y1="49.00" x2="761.70" y2="49.00" stroke="#18a018" stroke-width="1.1" />
<line x1="756.90" y1="44.40" x2="759.10" y2="44.40" stroke="#18a018" stroke-width="1.1" />
<rect x="766.20" y="38.6" width="15.8" height="17.8" fill="#d9e8f8" stroke="#c2d8f0" stroke-width="0.6"/>
<line x1="771.30" y1="41.80" x2="771.30" y2="53.60" stroke="#18a018" stroke-width="0.9" />
<rect x="770.20" y="43.6" width="2.2" height="8" fill="#e6f6e6" stroke="#18a018" stroke-width="0.9"/>
<line x1="776.10" y1="41.80" x2="776.10" y2="53.60" stroke="#18a018" stroke-width="0.9" />
<rect x="775.00" y="43.6" width="2.2" height="8" fill="#e6f6e6" stroke="#18a018" stroke-width="0.9"/>
<path d="M787.40 49.5 l1.6 -1.5 l1.4 1.6 l1.6 -5 l1.6 6.6 l1.6 -4.2 l1.4 1.4 l1 -1" fill="none" stroke="#18a018" stroke-width="0.9"/>
<line x1="802.20" y1="39.60" x2="802.20" y2="56.00" stroke="#bdbdbd" stroke-width="0.9" />
<ellipse cx="812.00" cy="46.3" rx="3.3" ry="4" fill="#fff" stroke="#2f78c4" stroke-width="1"/>
<line x1="814.30" y1="49.30" x2="817.40" y2="53.30" stroke="#2f78c4" stroke-width="1.1" />
<line x1="810.30" y1="46.30" x2="813.70" y2="46.30" stroke="#2f78c4" stroke-width="0.9" />
<line x1="812.00" y1="44.20" x2="812.00" y2="48.40" stroke="#2f78c4" stroke-width="0.9" />
<ellipse cx="829.60" cy="46.3" rx="3.3" ry="4" fill="#fff" stroke="#2f78c4" stroke-width="1"/>
<line x1="831.90" y1="49.30" x2="835.00" y2="53.30" stroke="#2f78c4" stroke-width="1.1" />
<line x1="827.90" y1="46.30" x2="831.30" y2="46.30" stroke="#2f78c4" stroke-width="0.9" />
<rect x="844.00" y="42.6" width="3.6" height="10.2" fill="#e8f1fb" stroke="#2f78c4" stroke-width="0.9"/>
<line x1="844.00" y1="47.70" x2="847.60" y2="47.70" stroke="#2f78c4" stroke-width="0.6" />
<ellipse cx="859.20" cy="46.6" rx="2.9" ry="3.6" fill="none" stroke="#333" stroke-width="1"/>
<line x1="861.20" y1="49.40" x2="863.40" y2="52.40" stroke="#333" stroke-width="1" />
<ellipse cx="877.00" cy="48.6" rx="3.2" ry="4" fill="#f6f6f6" stroke="#555" stroke-width="0.8"/>
<path d="M875.40 49 l1.6 1.6 l1.8 -2.6" fill="none" stroke="#777" stroke-width="0.6"/>
<ellipse cx="881.00" cy="45.9" rx="4.2" ry="5.2" fill="#e2331f"/>
<text class="u" transform="translate(881.00 48.74) scale(0.8 1)" font-size="7.6" fill="#fff" text-anchor="middle" font-weight="350" >1</text>
<path d="M897.60 41.4 l2 2 l-2 2 l-2 -2z" fill="#18a018"/>
<line x1="897.60" y1="45.00" x2="897.60" y2="48.40" stroke="#18a018" stroke-width="0.8" />
<text class="u" transform="translate(897.60 52.30) scale(0.9 1)" font-size="3.6" fill="#18a018" text-anchor="middle" font-weight="700" >LVL</text>
<rect x="905.00" y="43.4" width="27" height="9.2" fill="#fff" stroke="#a9a9a9" stroke-width="0.8"/>
<rect x="905.60" y="44.00" width="4.00" height="8.00" fill="#2fd02f" />
<rect x="493.10" y="58.00" width="443.50" height="166.70" fill="#000" />
<rect x="494.10" y="59.05" width="413.40" height="0.90" fill="#a8a8a8" />
<rect x="494.00" y="59.40" width="0.90" height="151.40" fill="#b8b8b8" />
<line x1="907.50" y1="59.20" x2="907.50" y2="210.80" stroke="#d8d8d8" stroke-width="0.9" />
<line x1="493.10" y1="210.40" x2="907.50" y2="210.40" stroke="#d8d8d8" stroke-width="0.9" />
<line x1="907.50" y1="77.00" x2="909.50" y2="77.00" stroke="#d8d8d8" stroke-width="0.8" />
<text class="c" x="910.10" y="79.34" font-size="6.5" fill="#cccccc" textLength="19.10" lengthAdjust="spacingAndGlyphs" >5045.40</text>
<line x1="907.50" y1="99.20" x2="909.50" y2="99.20" stroke="#d8d8d8" stroke-width="0.8" />
<text class="c" x="910.10" y="101.54" font-size="6.5" fill="#cccccc" textLength="19.10" lengthAdjust="spacingAndGlyphs" >5011.80</text>
<line x1="907.50" y1="121.40" x2="909.50" y2="121.40" stroke="#d8d8d8" stroke-width="0.8" />
<text class="c" x="910.10" y="123.74" font-size="6.5" fill="#cccccc" textLength="19.10" lengthAdjust="spacingAndGlyphs" >4978.20</text>
<line x1="907.50" y1="143.50" x2="909.50" y2="143.50" stroke="#d8d8d8" stroke-width="0.8" />
<text class="c" x="910.10" y="145.84" font-size="6.5" fill="#cccccc" textLength="19.10" lengthAdjust="spacingAndGlyphs" >4944.60</text>
<line x1="907.50" y1="165.70" x2="909.50" y2="165.70" stroke="#d8d8d8" stroke-width="0.8" />
<text class="c" x="910.10" y="168.04" font-size="6.5" fill="#cccccc" textLength="19.10" lengthAdjust="spacingAndGlyphs" >4911.00</text>
<line x1="907.50" y1="187.90" x2="909.50" y2="187.90" stroke="#d8d8d8" stroke-width="0.8" />
<text class="c" x="910.10" y="190.24" font-size="6.5" fill="#cccccc" textLength="19.10" lengthAdjust="spacingAndGlyphs" >4877.40</text>
<text class="c" x="494.80" y="219.08" font-size="6.6" fill="#e0e0e0" textLength="24.60" lengthAdjust="spacingAndGlyphs" >4 Feb 2026</text>
<line x1="530.00" y1="210.40" x2="530.00" y2="212.40" stroke="#d8d8d8" stroke-width="0.8" />
<text class="c" x="530.60" y="219.08" font-size="6.6" fill="#e0e0e0" textLength="27.20" lengthAdjust="spacingAndGlyphs" >4 Feb 16:20</text>
<line x1="565.40" y1="210.40" x2="565.40" y2="212.40" stroke="#d8d8d8" stroke-width="0.8" />
<text class="c" x="566.00" y="219.08" font-size="6.6" fill="#e0e0e0" textLength="27.20" lengthAdjust="spacingAndGlyphs" >4 Feb 16:40</text>
<line x1="600.80" y1="210.40" x2="600.80" y2="212.40" stroke="#d8d8d8" stroke-width="0.8" />
<text class="c" x="601.40" y="219.08" font-size="6.6" fill="#e0e0e0" textLength="27.20" lengthAdjust="spacingAndGlyphs" >4 Feb 17:00</text>
<line x1="636.20" y1="210.40" x2="636.20" y2="212.40" stroke="#d8d8d8" stroke-width="0.8" />
<text class="c" x="636.80" y="219.08" font-size="6.6" fill="#e0e0e0" textLength="27.20" lengthAdjust="spacingAndGlyphs" >4 Feb 17:20</text>
<line x1="671.60" y1="210.40" x2="671.60" y2="212.40" stroke="#d8d8d8" stroke-width="0.8" />
<text class="c" x="672.20" y="219.08" font-size="6.6" fill="#e0e0e0" textLength="27.20" lengthAdjust="spacingAndGlyphs" >4 Feb 17:40</text>
<line x1="707.00" y1="210.40" x2="707.00" y2="212.40" stroke="#d8d8d8" stroke-width="0.8" />
<text class="c" x="707.60" y="219.08" font-size="6.6" fill="#e0e0e0" textLength="27.20" lengthAdjust="spacingAndGlyphs" >4 Feb 18:00</text>
<line x1="742.40" y1="210.40" x2="742.40" y2="212.40" stroke="#d8d8d8" stroke-width="0.8" />
<text class="c" x="743.00" y="219.08" font-size="6.6" fill="#e0e0e0" textLength="27.20" lengthAdjust="spacingAndGlyphs" >4 Feb 18:20</text>
<line x1="777.80" y1="210.40" x2="777.80" y2="212.40" stroke="#d8d8d8" stroke-width="0.8" />
<text class="c" x="778.40" y="219.08" font-size="6.6" fill="#e0e0e0" textLength="27.20" lengthAdjust="spacingAndGlyphs" >4 Feb 18:40</text>
<line x1="813.20" y1="210.40" x2="813.20" y2="212.40" stroke="#d8d8d8" stroke-width="0.8" />
<text class="c" x="813.80" y="219.08" font-size="6.6" fill="#e0e0e0" textLength="27.20" lengthAdjust="spacingAndGlyphs" >4 Feb 19:00</text>
<line x1="848.60" y1="210.40" x2="848.60" y2="212.40" stroke="#d8d8d8" stroke-width="0.8" />
<text class="c" x="849.20" y="219.08" font-size="6.6" fill="#e0e0e0" textLength="27.20" lengthAdjust="spacingAndGlyphs" >4 Feb 19:20</text>
<line x1="638.60" y1="172.40" x2="907.50" y2="172.40" stroke="#39434f" stroke-width="1.1" />
<line x1="640.50" y1="172.40" x2="907.50" y2="172.40" stroke="#e23c48" stroke-width="1" stroke-dasharray="5.2 2.7 2.2 2.9"/>
<line x1="640.50" y1="174.30" x2="907.50" y2="174.30" stroke="#22c022" stroke-width="1" stroke-dasharray="1.9 1.35"/>
<line x1="640.50" y1="176.40" x2="907.50" y2="176.40" stroke="#22c022" stroke-width="1" stroke-dasharray="1.9 1.35"/>
<line x1="640.50" y1="178.50" x2="907.50" y2="178.50" stroke="#22c022" stroke-width="1" stroke-dasharray="1.9 1.35"/>
<line x1="640.50" y1="178.50" x2="907.50" y2="178.50" stroke="#f01010" stroke-width="1" stroke-dasharray="5.2 2.7 2.2 2.9"/>
<line x1="640.50" y1="180.50" x2="907.50" y2="180.50" stroke="#22c022" stroke-width="1" stroke-dasharray="1.9 1.35"/>
<line x1="493.90" y1="172.40" x2="498.30" y2="172.40" stroke="#e03c48" stroke-width="0.9" />
<line x1="493.90" y1="174.30" x2="498.30" y2="174.30" stroke="#22c022" stroke-width="0.9" stroke-dasharray="1.9 1.35"/>
<line x1="493.90" y1="176.40" x2="498.30" y2="176.40" stroke="#22c022" stroke-width="0.9" stroke-dasharray="1.9 1.35"/>
<line x1="493.90" y1="178.50" x2="498.30" y2="178.50" stroke="#22c022" stroke-width="0.9" stroke-dasharray="1.9 1.35"/>
<line x1="493.90" y1="178.50" x2="498.30" y2="178.50" stroke="#f01010" stroke-width="0.9" />
<line x1="493.90" y1="180.50" x2="498.30" y2="180.50" stroke="#22c022" stroke-width="0.9" stroke-dasharray="1.9 1.35"/>
<rect x="498.40" y="165.00" width="1.30" height="10.60" fill="#e0e0e0" />
<line x1="639.00" y1="121.10" x2="639.00" y2="129.80" stroke="#10e010" stroke-width="1" />
<line x1="645.00" y1="122.60" x2="645.00" y2="138.80" stroke="#10e010" stroke-width="1" />
<rect x="642.40" y="129.40" width="5.2" height="5.30" fill="#fff" stroke="#10e010" stroke-width="0.9"/>
<line x1="653.87" y1="131.40" x2="653.87" y2="163.40" stroke="#10e010" stroke-width="1" />
<rect x="651.27" y="134.30" width="5.2" height="25.20" fill="#fff" stroke="#10e010" stroke-width="0.9"/>
<line x1="662.74" y1="154.30" x2="662.74" y2="180.90" stroke="#10e010" stroke-width="1" />
<rect x="660.14" y="159.50" width="5.2" height="5.30" fill="#fff" stroke="#10e010" stroke-width="0.9"/>
<line x1="671.61" y1="141.10" x2="671.61" y2="168.30" stroke="#10e010" stroke-width="1" />
<rect x="669.01" y="143.20" width="5.2" height="21.40" fill="#000" stroke="#10e010" stroke-width="0.8"/>
<line x1="680.48" y1="140.10" x2="680.48" y2="151.20" stroke="#10e010" stroke-width="1" />
<rect x="677.88" y="143.40" width="5.2" height="5.10" fill="#fff" stroke="#10e010" stroke-width="0.9"/>
<line x1="689.35" y1="142.00" x2="689.35" y2="152.70" stroke="#10e010" stroke-width="1" />
<line x1="686.35" y1="148.00" x2="692.35" y2="148.00" stroke="#10e010" stroke-width="1" />
<line x1="698.22" y1="140.10" x2="698.22" y2="166.00" stroke="#10e010" stroke-width="1" />
<rect x="695.62" y="147.90" width="5.2" height="11.60" fill="#fff" stroke="#10e010" stroke-width="0.9"/>
<line x1="707.09" y1="158.20" x2="707.09" y2="176.00" stroke="#10e010" stroke-width="1" />
<rect x="704.49" y="159.50" width="5.2" height="6.80" fill="#fff" stroke="#10e010" stroke-width="0.9"/>
<line x1="715.96" y1="156.00" x2="715.96" y2="168.30" stroke="#10e010" stroke-width="1" />
<rect x="713.36" y="158.40" width="5.2" height="7.70" fill="#000" stroke="#10e010" stroke-width="0.8"/>
<line x1="724.83" y1="145.90" x2="724.83" y2="162.80" stroke="#10e010" stroke-width="1" />
<rect x="722.23" y="152.00" width="5.2" height="6.40" fill="#000" stroke="#10e010" stroke-width="0.8"/>
<line x1="733.70" y1="148.90" x2="733.70" y2="164.80" stroke="#10e010" stroke-width="1" />
<rect x="731.10" y="151.80" width="5.2" height="11.60" fill="#fff" stroke="#10e010" stroke-width="0.9"/>
<line x1="742.57" y1="163.40" x2="742.57" y2="172.60" stroke="#10e010" stroke-width="1" />
<rect x="739.97" y="163.40" width="5.2" height="9.20" fill="#fff" stroke="#10e010" stroke-width="0.9"/>
<line x1="751.44" y1="155.10" x2="751.44" y2="175.10" stroke="#10e010" stroke-width="1" />
<rect x="748.84" y="156.40" width="5.2" height="16.00" fill="#000" stroke="#10e010" stroke-width="0.8"/>
<line x1="760.31" y1="149.80" x2="760.31" y2="163.40" stroke="#10e010" stroke-width="1" />
<line x1="757.31" y1="156.60" x2="763.31" y2="156.60" stroke="#10e010" stroke-width="1" />
<line x1="769.18" y1="154.30" x2="769.18" y2="166.40" stroke="#10e010" stroke-width="1" />
<rect x="766.58" y="157.00" width="5.2" height="9.40" fill="#fff" stroke="#10e010" stroke-width="0.9"/>
<line x1="778.05" y1="166.40" x2="778.05" y2="175.60" stroke="#10e010" stroke-width="1" />
<rect x="775.45" y="166.40" width="5.2" height="9.20" fill="#fff" stroke="#10e010" stroke-width="0.9"/>
<line x1="786.92" y1="171.80" x2="786.92" y2="205.80" stroke="#10e010" stroke-width="1" />
<rect x="784.32" y="175.10" width="5.2" height="17.50" fill="#fff" stroke="#10e010" stroke-width="0.9"/>
<line x1="795.79" y1="168.30" x2="795.79" y2="192.60" stroke="#10e010" stroke-width="1" />
<rect x="793.19" y="172.40" width="5.2" height="20.00" fill="#000" stroke="#10e010" stroke-width="0.8"/>
<line x1="804.66" y1="166.30" x2="804.66" y2="172.70" stroke="#10e010" stroke-width="1" />
<rect x="802.06" y="170.40" width="5.2" height="2.10" fill="#000" stroke="#10e010" stroke-width="0.8"/>
<line x1="813.53" y1="163.00" x2="813.53" y2="178.60" stroke="#10e010" stroke-width="1" />
<rect x="810.93" y="163.60" width="5.2" height="7.00" fill="#000" stroke="#10e010" stroke-width="0.8"/>
<line x1="822.40" y1="162.00" x2="822.40" y2="175.70" stroke="#10e010" stroke-width="1" />
<rect x="819.80" y="164.00" width="5.2" height="5.80" fill="#fff" stroke="#10e010" stroke-width="0.9"/>
<line x1="831.27" y1="158.20" x2="831.27" y2="174.30" stroke="#10e010" stroke-width="1" />
<rect x="828.67" y="159.00" width="5.2" height="11.20" fill="#000" stroke="#10e010" stroke-width="0.8"/>
<line x1="840.14" y1="155.80" x2="840.14" y2="167.90" stroke="#10e010" stroke-width="1" />
<rect x="837.54" y="159.10" width="5.2" height="8.80" fill="#fff" stroke="#10e010" stroke-width="0.9"/>
<line x1="849.01" y1="161.10" x2="849.01" y2="173.10" stroke="#10e010" stroke-width="1" />
<rect x="846.41" y="167.90" width="5.2" height="1.50" fill="#fff" stroke="#10e010" stroke-width="0.9"/>
<line x1="857.88" y1="169.40" x2="857.88" y2="180.50" stroke="#10e010" stroke-width="1" />
<rect x="855.28" y="169.40" width="5.2" height="3.00" fill="#fff" stroke="#10e010" stroke-width="0.9"/>
<rect x="908.30" y="168.80" width="22.00" height="7.90" fill="#8aa2c2" />
<text class="c" x="910.10" y="175.08" font-size="6.6" fill="#0c141e" textLength="19.30" lengthAdjust="spacingAndGlyphs" >4900.07</text>
<rect x="801.60" y="58.70" width="54.40" height="5.40" fill="#f01414" />
<path d="M856.10 59.2 h4.8 l-2.4 3.8z" fill="#9fb2c6"/>
<text class="c" x="873.90" y="69.80" font-size="6.4" fill="#e8e8e8" textLength="19.80" lengthAdjust="spacingAndGlyphs" >MADING</text>
<path d="M897.30 66.4 l4 -2 l4 2 l-4 2z" fill="#3f9be8"/>
<path d="M898.90 67.6 v2.2 a2.4 1.2 0 0 0 4.8 0 v-2.2 l-2.4 1.2z" fill="#2b7fd0"/>
<line x1="897.70" y1="66.60" x2="897.70" y2="70.40" stroke="#3f9be8" stroke-width="0.6" />
<rect x="497.10" y="63.40" width="8.30" height="7.40" fill="#fff" />
<rect x="497.10" y="63.40" width="0.70" height="7.40" fill="#b42020" />
<rect x="504.70" y="63.40" width="0.70" height="7.40" fill="#1d5fb0" />
<rect x="497.10" y="63.40" width="4.10" height="0.80" fill="#b42020" />
<rect x="501.20" y="63.40" width="4.20" height="0.80" fill="#1d5fb0" />
<rect x="498.60" y="64.90" width="2.20" height="1.00" fill="#e03c3c" />
<rect x="501.70" y="64.90" width="2.90" height="1.00" fill="#2f7ad0" />
<rect x="498.60" y="66.95" width="2.20" height="1.00" fill="#e03c3c" />
<rect x="501.70" y="66.95" width="2.90" height="1.00" fill="#2f7ad0" />
<rect x="498.60" y="69.00" width="2.20" height="1.00" fill="#e03c3c" />
<rect x="501.70" y="69.00" width="2.90" height="1.00" fill="#2f7ad0" />
<rect x="508.60" y="63.40" width="4.00" height="7.50" fill="#e25050" />
<rect x="509.80" y="67.00" width="2.00" height="3.50" fill="#fbdcdc" />
<rect x="513.40" y="63.40" width="3.30" height="7.50" fill="#2a7ad4" />
<rect x="514.20" y="67.00" width="1.90" height="3.90" fill="#cfe4fa" />
<rect x="511.40" y="64.10" width="2.60" height="0.90" fill="#e4e4e4" />
<rect x="512.80" y="63.40" width="1.40" height="3.20" fill="#0c1c3c" />
<text class="c" x="520.00" y="69.78" font-size="6.6" fill="#e8e8e8" textLength="92.60" lengthAdjust="spacingAndGlyphs" >XAUUSD.c, M5:  Gold vs US Dollar / Spot</text>
<rect x="494.50" y="71.00" width="3.20" height="4.90" fill="#16e016" />
<rect x="494.80" y="71.80" width="2.00" height="3.30" fill="#fff" />
<line x1="503.10" y1="71.00" x2="503.10" y2="74.00" stroke="#0a9a0a" stroke-width="0.8" />
<rect x="520.60" y="73.00" width="0.90" height="0.90" fill="#10c010" />
<rect x="500.90" y="75.40" width="137.60" height="15.20" fill="#202020" />
<text class="p" transform="translate(503.30 87.14) scale(0.63 1)" x="0.00 6.98 13.97" font-size="11.77" fill="#e0e000" font-weight="400">===</text>
<text class="p" x="520.90" y="86.72" font-size="10.6" fill="#e0e000" textLength="35.20" lengthAdjust="spacingAndGlyphs" font-weight="500" >策略状态</text>
<text class="p" transform="translate(560.50 87.14) scale(0.63 1)" x="0.00 6.98 13.97" font-size="11.77" fill="#e0e000" font-weight="400">===</text>
<text class="p" x="503.30" y="99.77" font-size="8.8" fill="#10e010" textLength="51.10" lengthAdjust="spacingAndGlyphs" font-weight="700" >当日已平仓金额</text>
<text class="p" transform="translate(554.40 100.12) scale(0.63 1)" x="0.00" font-size="9.77" fill="#10e010" font-weight="700">:</text>
<text class="p" transform="translate(561.70 100.12) scale(0.63 1)" x="0.00 5.79 11.59 17.38 23.17 28.97 34.76" font-size="9.77" fill="#10e010" font-weight="700">3618.64</text>
<text class="p" x="503.30" y="113.61" font-size="8.8" fill="#f4f4f4" textLength="29.20" lengthAdjust="spacingAndGlyphs" font-weight="350" >趋势状态</text>
<text class="p" transform="translate(532.50 113.96) scale(0.63 1)" x="0.00" font-size="9.77" fill="#f4f4f4">:</text>
<text class="p" x="539.80" y="113.61" font-size="8.8" fill="#f4f4f4" textLength="29.20" lengthAdjust="spacingAndGlyphs" font-weight="350" >震荡行情</text>
<text class="p" x="503.30" y="127.45" font-size="8.8" fill="#0c960c" textLength="29.20" lengthAdjust="spacingAndGlyphs" font-weight="350" >时间状态</text>
<text class="p" transform="translate(532.50 127.80) scale(0.63 1)" x="0.00" font-size="9.77" fill="#0c960c">:</text>
<text class="p" x="539.80" y="127.45" font-size="8.8" fill="#0c960c" textLength="29.20" lengthAdjust="spacingAndGlyphs" font-weight="350" >交易时间</text>
<text class="p" transform="translate(503.30 141.64) scale(0.63 1)" x="0.00 5.79 11.59 17.38" font-size="9.77" fill="#c4d0dc">RSI:</text>
<text class="p" transform="translate(521.55 141.64) scale(0.63 1)" x="0.00 5.79 11.59 17.38 23.17" font-size="9.77" fill="#c4d0dc">39.23</text>
<text class="p" transform="translate(543.45 141.64) scale(0.63 1)" x="0.00" font-size="9.77" fill="#c4d0dc">(</text>
<text class="p" x="547.10" y="141.29" font-size="8.8" fill="#c4d0dc" textLength="14.60" lengthAdjust="spacingAndGlyphs" font-weight="350" >偏空</text>
<text class="p" transform="translate(561.70 141.64) scale(0.63 1)" x="0.00" font-size="9.77" fill="#c4d0dc">)</text>
<text class="p" x="503.30" y="155.13" font-size="8.8" fill="#0c960c" textLength="29.20" lengthAdjust="spacingAndGlyphs" font-weight="350" >多单允许</text>
<text class="p" transform="translate(532.50 155.48) scale(0.63 1)" x="0.00" font-size="9.77" fill="#0c960c">:</text>
<text class="p" x="539.80" y="155.13" font-size="8.8" fill="#0c960c" textLength="7.30" lengthAdjust="spacingAndGlyphs" font-weight="350" >是</text>
<text class="p" x="503.30" y="168.97" font-size="8.8" fill="#0c960c" textLength="29.20" lengthAdjust="spacingAndGlyphs" font-weight="350" >空单允许</text>
<text class="p" transform="translate(532.50 169.32) scale(0.63 1)" x="0.00" font-size="9.77" fill="#0c960c">:</text>
<text class="p" x="539.80" y="168.97" font-size="8.8" fill="#0c960c" textLength="7.30" lengthAdjust="spacingAndGlyphs" font-weight="350" >是</text>
<text class="p" x="503.30" y="182.81" font-size="8.8" fill="#f4f4f4" textLength="14.60" lengthAdjust="spacingAndGlyphs" font-weight="350" >持仓</text>
<text class="p" transform="translate(517.90 183.16) scale(0.63 1)" x="0.00" font-size="9.77" fill="#f4f4f4">:</text>
<text class="p" x="525.20" y="182.81" font-size="8.8" fill="#f4f4f4" textLength="7.30" lengthAdjust="spacingAndGlyphs" font-weight="350" >多</text>
<text class="p" transform="translate(532.50 183.16) scale(0.63 1)" x="0.00 5.79 11.59 17.38 23.17" font-size="9.77" fill="#f4f4f4">=0.01</text>
<text class="p" x="554.40" y="182.81" font-size="8.8" fill="#f4f4f4" textLength="7.30" lengthAdjust="spacingAndGlyphs" font-weight="350" >空</text>
<text class="p" transform="translate(561.70 183.16) scale(0.63 1)" x="0.00 5.79 11.59 17.38 23.17" font-size="9.77" fill="#f4f4f4">=0.04</text>
<text class="p" x="503.30" y="196.65" font-size="8.8" fill="#f01010" textLength="36.50" lengthAdjust="spacingAndGlyphs" font-weight="700" >持仓总盈亏</text>
<text class="p" transform="translate(539.80 197.00) scale(0.63 1)" x="0.00" font-size="9.77" fill="#f01010" font-weight="700">:</text>
<text class="p" transform="translate(547.10 197.00) scale(0.63 1)" x="0.00 5.79 11.59 17.38 23.17 28.97" font-size="9.77" fill="#f01010" font-weight="700">-26.33</text>
<text class="p" x="503.30" y="208.57" font-size="6.8" fill="#5c5c5c" textLength="23.36" lengthAdjust="spacingAndGlyphs" font-weight="350" >更新时间</text>
<text class="p" transform="translate(526.66 208.84) scale(0.63 1)" x="0.00" font-size="7.55" fill="#5c5c5c">:</text>
<text class="p" transform="translate(532.50 208.84) scale(0.63 1)" x="0.00 4.63 9.27 13.90 18.54 23.17 27.81 32.44" font-size="7.55" fill="#5c5c5c">19:27:43</text>
<rect x="493.60" y="224.70" width="443.00" height="3.00" fill="#f7f7f7" />
<rect x="493.60" y="227.10" width="443.00" height="0.80" fill="#b6b6b6" />
<rect x="493.60" y="227.60" width="8.60" height="235.40" fill="#c0cede" />
<line x1="496.60" y1="233.90" x2="500.00" y2="238.30" stroke="#111" stroke-width="1.2" />
<line x1="500.00" y1="233.90" x2="496.60" y2="238.30" stroke="#111" stroke-width="1.2" />
<rect x="502.20" y="258.95" width="434.40" height="0.70" fill="#d4d4d4" />
<rect x="502.20" y="259.35" width="434.40" height="14.45" fill="#ececec" />
<rect x="502.20" y="273.40" width="434.40" height="0.70" fill="#d4d4d4" />
<rect x="502.20" y="287.85" width="434.40" height="0.70" fill="#d4d4d4" />
<rect x="502.20" y="288.25" width="434.40" height="14.45" fill="#ececec" />
<rect x="502.20" y="302.30" width="434.40" height="0.70" fill="#d4d4d4" />
<rect x="502.20" y="316.75" width="434.40" height="0.70" fill="#d4d4d4" />
<rect x="502.20" y="317.25" width="434.40" height="15.25" fill="#cbcbcb" />
<line x1="559.00" y1="228.60" x2="559.00" y2="317.15" stroke="#d4d4d4" stroke-width="0.9" />
<line x1="559.00" y1="228.60" x2="559.00" y2="244.90" stroke="#b9b9b9" stroke-width="0.9" />
<line x1="624.50" y1="228.60" x2="624.50" y2="317.15" stroke="#d4d4d4" stroke-width="0.9" />
<line x1="624.50" y1="228.60" x2="624.50" y2="244.90" stroke="#b9b9b9" stroke-width="0.9" />
<line x1="667.50" y1="228.60" x2="667.50" y2="317.15" stroke="#d4d4d4" stroke-width="0.9" />
<line x1="667.50" y1="228.60" x2="667.50" y2="244.90" stroke="#b9b9b9" stroke-width="0.9" />
<line x1="711.00" y1="228.60" x2="711.00" y2="317.15" stroke="#d4d4d4" stroke-width="0.9" />
<line x1="711.00" y1="228.60" x2="711.00" y2="244.90" stroke="#b9b9b9" stroke-width="0.9" />
<line x1="754.10" y1="228.60" x2="754.10" y2="317.15" stroke="#d4d4d4" stroke-width="0.9" />
<line x1="754.10" y1="228.60" x2="754.10" y2="244.90" stroke="#b9b9b9" stroke-width="0.9" />
<line x1="797.30" y1="228.60" x2="797.30" y2="317.15" stroke="#d4d4d4" stroke-width="0.9" />
<line x1="797.30" y1="228.60" x2="797.30" y2="244.90" stroke="#b9b9b9" stroke-width="0.9" />
<line x1="840.30" y1="228.60" x2="840.30" y2="317.15" stroke="#d4d4d4" stroke-width="0.9" />
<line x1="840.30" y1="228.60" x2="840.30" y2="244.90" stroke="#b9b9b9" stroke-width="0.9" />
<line x1="883.20" y1="228.60" x2="883.20" y2="317.15" stroke="#d4d4d4" stroke-width="0.9" />
<line x1="883.20" y1="228.60" x2="883.20" y2="244.90" stroke="#b9b9b9" stroke-width="0.9" />
<text class="u" x="507.00" y="239.53" font-size="8.7" fill="#000" textLength="26.00" lengthAdjust="spacingAndGlyphs" font-weight="400" >交易品种</text>
<path d="M614.60 237.6 h4 l-2 -2.6z" fill="#222"/>
<text class="u" x="608.80" y="239.53" font-size="8.7" fill="#000" textLength="12.90" lengthAdjust="spacingAndGlyphs" text-anchor="end" font-weight="400" >时间</text>
<text class="u" x="664.50" y="239.53" font-size="8.7" fill="#000" textLength="12.90" lengthAdjust="spacingAndGlyphs" text-anchor="end" font-weight="400" >类型</text>
<text class="u" x="707.80" y="239.53" font-size="8.7" fill="#000" textLength="19.90" lengthAdjust="spacingAndGlyphs" text-anchor="end" font-weight="400" >交易量</text>
<text class="u" x="750.90" y="239.53" font-size="8.7" fill="#000" textLength="12.90" lengthAdjust="spacingAndGlyphs" text-anchor="end" font-weight="400" >价位</text>
<text class="u" x="794.70" y="239.53" font-size="8.7" fill="#000" textLength="12.90" lengthAdjust="spacingAndGlyphs" text-anchor="end" font-weight="400" >止损</text>
<text class="u" x="837.40" y="239.53" font-size="8.7" fill="#000" textLength="12.90" lengthAdjust="spacingAndGlyphs" text-anchor="end" font-weight="400" >止盈</text>
<text class="u" x="880.20" y="239.53" font-size="8.7" fill="#000" textLength="12.90" lengthAdjust="spacingAndGlyphs" text-anchor="end" font-weight="400" >价位</text>
<text class="u" x="931.60" y="239.53" font-size="8.7" fill="#000" textLength="12.60" lengthAdjust="spacingAndGlyphs" text-anchor="end" font-weight="400" >盈利</text>
<rect x="506.10" y="248.00" width="4.6" height="9.4" rx="1" fill="#fff" stroke="#e04848" stroke-width="0.8"/>
<rect x="508.00" y="250.50" width="0.90" height="1.00" fill="#e04848" />
<rect x="508.00" y="252.70" width="0.90" height="1.00" fill="#e04848" />
<text class="u" x="514.60" y="256.03" font-size="8.7" fill="#000" textLength="27.60" lengthAdjust="spacingAndGlyphs" font-weight="400" >xauusd.c</text>
<text class="u" x="562.00" y="256.03" font-size="8.7" fill="#000" textLength="60.30" lengthAdjust="spacingAndGlyphs" font-weight="400" >2026.02.04 19:27:...</text>
<text class="u" x="665.70" y="256.03" font-size="8.7" fill="#000" textLength="9.60" lengthAdjust="spacingAndGlyphs" text-anchor="end" font-weight="400" >sell</text>
<text class="u" x="708.60" y="256.03" font-size="8.7" fill="#000" textLength="11.80" lengthAdjust="spacingAndGlyphs" text-anchor="end" font-weight="400" >0.01</text>
<text class="u" x="752.30" y="256.03" font-size="8.7" fill="#000" textLength="24.40" lengthAdjust="spacingAndGlyphs" text-anchor="end" font-weight="400" >4889.46</text>
<text class="u" x="827.50" y="256.03" font-size="8.7" fill="#000" textLength="24.40" lengthAdjust="spacingAndGlyphs" text-anchor="end" font-weight="400" >4892.44</text>
<line x1="833.60" y1="250.30" x2="837.40" y2="255.50" stroke="#808080" stroke-width="1.05" />
<line x1="837.40" y1="250.30" x2="833.60" y2="255.50" stroke="#808080" stroke-width="1.05" />
<text class="u" x="880.80" y="256.03" font-size="8.7" fill="#000" textLength="24.40" lengthAdjust="spacingAndGlyphs" text-anchor="end" font-weight="400" >4900.47</text>
<text class="u" x="922.80" y="256.03" font-size="8.7" fill="#f01818" textLength="18.70" lengthAdjust="spacingAndGlyphs" text-anchor="end" font-weight="400" >-11.01</text>
<line x1="928.50" y1="250.30" x2="932.30" y2="255.50" stroke="#808080" stroke-width="1.05" />
<line x1="932.30" y1="250.30" x2="928.50" y2="255.50" stroke="#808080" stroke-width="1.05" />
<rect x="506.10" y="262.45" width="4.6" height="9.4" rx="1" fill="#fff" stroke="#e04848" stroke-width="0.8"/>
<rect x="508.00" y="264.95" width="0.90" height="1.00" fill="#e04848" />
<rect x="508.00" y="267.15" width="0.90" height="1.00" fill="#e04848" />
<text class="u" x="514.60" y="270.48" font-size="8.7" fill="#000" textLength="27.60" lengthAdjust="spacingAndGlyphs" font-weight="400" >xauusd.c</text>
<text class="u" x="562.00" y="270.48" font-size="8.7" fill="#000" textLength="60.30" lengthAdjust="spacingAndGlyphs" font-weight="400" >2026.02.04 19:27:...</text>
<text class="u" x="665.70" y="270.48" font-size="8.7" fill="#000" textLength="9.60" lengthAdjust="spacingAndGlyphs" text-anchor="end" font-weight="400" >sell</text>
<text class="u" x="708.60" y="270.48" font-size="8.7" fill="#000" textLength="11.80" lengthAdjust="spacingAndGlyphs" text-anchor="end" font-weight="400" >0.01</text>
<text class="u" x="752.30" y="270.48" font-size="8.7" fill="#000" textLength="24.40" lengthAdjust="spacingAndGlyphs" text-anchor="end" font-weight="400" >4892.54</text>
<text class="u" x="827.50" y="270.48" font-size="8.7" fill="#000" textLength="24.40" lengthAdjust="spacingAndGlyphs" text-anchor="end" font-weight="400" >4892.44</text>
<line x1="833.60" y1="264.75" x2="837.40" y2="269.95" stroke="#808080" stroke-width="1.05" />
<line x1="837.40" y1="264.75" x2="833.60" y2="269.95" stroke="#808080" stroke-width="1.05" />
<text class="u" x="880.80" y="270.48" font-size="8.7" fill="#000" textLength="24.40" lengthAdjust="spacingAndGlyphs" text-anchor="end" font-weight="400" >4900.47</text>
<text class="u" x="922.80" y="270.48" font-size="8.7" fill="#f01818" textLength="14.90" lengthAdjust="spacingAndGlyphs" text-anchor="end" font-weight="400" >-7.93</text>
<line x1="928.50" y1="264.75" x2="932.30" y2="269.95" stroke="#808080" stroke-width="1.05" />
<line x1="932.30" y1="264.75" x2="928.50" y2="269.95" stroke="#808080" stroke-width="1.05" />
<rect x="506.10" y="276.90" width="4.6" height="9.4" rx="1" fill="#fff" stroke="#e04848" stroke-width="0.8"/>
<rect x="508.00" y="279.40" width="0.90" height="1.00" fill="#e04848" />
<rect x="508.00" y="281.60" width="0.90" height="1.00" fill="#e04848" />
<text class="u" x="514.60" y="284.93" font-size="8.7" fill="#000" textLength="27.60" lengthAdjust="spacingAndGlyphs" font-weight="400" >xauusd.c</text>
<text class="u" x="562.00" y="284.93" font-size="8.7" fill="#000" textLength="60.30" lengthAdjust="spacingAndGlyphs" font-weight="400" >2026.02.04 19:27:...</text>
<text class="u" x="665.70" y="284.93" font-size="8.7" fill="#000" textLength="9.60" lengthAdjust="spacingAndGlyphs" text-anchor="end" font-weight="400" >sell</text>
<text class="u" x="708.60" y="284.93" font-size="8.7" fill="#000" textLength="11.80" lengthAdjust="spacingAndGlyphs" text-anchor="end" font-weight="400" >0.01</text>
<text class="u" x="752.30" y="284.93" font-size="8.7" fill="#000" textLength="24.40" lengthAdjust="spacingAndGlyphs" text-anchor="end" font-weight="400" >4895.60</text>
<text class="u" x="827.50" y="284.93" font-size="8.7" fill="#000" textLength="24.40" lengthAdjust="spacingAndGlyphs" text-anchor="end" font-weight="400" >4892.44</text>
<line x1="833.60" y1="279.20" x2="837.40" y2="284.40" stroke="#808080" stroke-width="1.05" />
<line x1="837.40" y1="279.20" x2="833.60" y2="284.40" stroke="#808080" stroke-width="1.05" />
<text class="u" x="880.80" y="284.93" font-size="8.7" fill="#000" textLength="24.40" lengthAdjust="spacingAndGlyphs" text-anchor="end" font-weight="400" >4900.47</text>
<text class="u" x="922.80" y="284.93" font-size="8.7" fill="#f01818" textLength="14.90" lengthAdjust="spacingAndGlyphs" text-anchor="end" font-weight="400" >-4.87</text>
<line x1="928.50" y1="279.20" x2="932.30" y2="284.40" stroke="#808080" stroke-width="1.05" />
<line x1="932.30" y1="279.20" x2="928.50" y2="284.40" stroke="#808080" stroke-width="1.05" />
<rect x="506.10" y="291.35" width="4.6" height="9.4" rx="1" fill="#fff" stroke="#e04848" stroke-width="0.8"/>
<rect x="508.00" y="293.85" width="0.90" height="1.00" fill="#e04848" />
<rect x="508.00" y="296.05" width="0.90" height="1.00" fill="#e04848" />
<text class="u" x="514.60" y="299.38" font-size="8.7" fill="#000" textLength="27.60" lengthAdjust="spacingAndGlyphs" font-weight="400" >xauusd.c</text>
<text class="u" x="562.00" y="299.38" font-size="8.7" fill="#000" textLength="60.30" lengthAdjust="spacingAndGlyphs" font-weight="400" >2026.02.04 19:27:...</text>
<text class="u" x="665.70" y="299.38" font-size="8.7" fill="#000" textLength="9.60" lengthAdjust="spacingAndGlyphs" text-anchor="end" font-weight="400" >sell</text>
<text class="u" x="708.60" y="299.38" font-size="8.7" fill="#000" textLength="11.80" lengthAdjust="spacingAndGlyphs" text-anchor="end" font-weight="400" >0.01</text>
<text class="u" x="752.30" y="299.38" font-size="8.7" fill="#000" textLength="24.40" lengthAdjust="spacingAndGlyphs" text-anchor="end" font-weight="400" >4898.14</text>
<text class="u" x="827.50" y="299.38" font-size="8.7" fill="#000" textLength="24.40" lengthAdjust="spacingAndGlyphs" text-anchor="end" font-weight="400" >4892.44</text>
<line x1="833.60" y1="293.65" x2="837.40" y2="298.85" stroke="#808080" stroke-width="1.05" />
<line x1="837.40" y1="293.65" x2="833.60" y2="298.85" stroke="#808080" stroke-width="1.05" />
<text class="u" x="880.80" y="299.38" font-size="8.7" fill="#000" textLength="24.40" lengthAdjust="spacingAndGlyphs" text-anchor="end" font-weight="400" >4900.47</text>
<text class="u" x="922.80" y="299.38" font-size="8.7" fill="#f01818" textLength="14.90" lengthAdjust="spacingAndGlyphs" text-anchor="end" font-weight="400" >-2.33</text>
<line x1="928.50" y1="293.65" x2="932.30" y2="298.85" stroke="#808080" stroke-width="1.05" />
<line x1="932.30" y1="293.65" x2="928.50" y2="298.85" stroke="#808080" stroke-width="1.05" />
<rect x="506.10" y="305.80" width="4.6" height="9.4" rx="1" fill="#fff" stroke="#2c7bd0" stroke-width="0.8"/>
<rect x="508.00" y="308.30" width="0.90" height="1.00" fill="#2c7bd0" />
<rect x="508.00" y="310.50" width="0.90" height="1.00" fill="#2c7bd0" />
<text class="u" x="514.60" y="313.83" font-size="8.7" fill="#000" textLength="27.60" lengthAdjust="spacingAndGlyphs" font-weight="400" >xauusd.c</text>
<text class="u" x="562.00" y="313.83" font-size="8.7" fill="#000" textLength="60.30" lengthAdjust="spacingAndGlyphs" font-weight="400" >2026.02.04 19:27:...</text>
<text class="u" x="665.70" y="313.83" font-size="8.7" fill="#000" textLength="11.00" lengthAdjust="spacingAndGlyphs" text-anchor="end" font-weight="400" >buy</text>
<text class="u" x="708.60" y="313.83" font-size="8.7" fill="#000" textLength="11.80" lengthAdjust="spacingAndGlyphs" text-anchor="end" font-weight="400" >0.01</text>
<text class="u" x="752.30" y="313.83" font-size="8.7" fill="#000" textLength="24.40" lengthAdjust="spacingAndGlyphs" text-anchor="end" font-weight="400" >4900.51</text>
<text class="u" x="827.50" y="313.83" font-size="8.7" fill="#000" textLength="24.40" lengthAdjust="spacingAndGlyphs" text-anchor="end" font-weight="400" >4902.01</text>
<line x1="833.60" y1="308.10" x2="837.40" y2="313.30" stroke="#808080" stroke-width="1.05" />
<line x1="837.40" y1="308.10" x2="833.60" y2="313.30" stroke="#808080" stroke-width="1.05" />
<text class="u" x="880.80" y="313.83" font-size="8.7" fill="#000" textLength="24.40" lengthAdjust="spacingAndGlyphs" text-anchor="end" font-weight="400" >4900.08</text>
<text class="u" x="922.80" y="313.83" font-size="8.7" fill="#f01818" textLength="14.90" lengthAdjust="spacingAndGlyphs" text-anchor="end" font-weight="400" >-0.43</text>
<line x1="928.50" y1="308.10" x2="932.30" y2="313.30" stroke="#808080" stroke-width="1.05" />
<line x1="932.30" y1="308.10" x2="928.50" y2="313.30" stroke="#808080" stroke-width="1.05" />
<ellipse cx="508.80" cy="325.05" rx="2.4" ry="3.1" fill="none" stroke="#333" stroke-width="0.7"/>
<line x1="507.50" y1="325.05" x2="510.10" y2="325.05" stroke="#333" stroke-width="0.7" />
<text class="u" x="514.80" y="328.18" font-size="8.7" fill="#000" textLength="321.00" lengthAdjust="spacingAndGlyphs" font-weight="700" >结余: 17 999.37 USC  净值: 17 972.80  预付款: 8.56  可用预付款: 17 964.24  预付款维持率: 209 962.62 %</text>
<text class="u" x="923.20" y="328.18" font-size="8.7" fill="#000" textLength="19.10" lengthAdjust="spacingAndGlyphs" text-anchor="end" font-weight="700" >-26.57</text>
<ellipse cx="930.40" cy="325.05" rx="3.9" ry="4.9" fill="#f2f2f2"/>
<line x1="927.40" y1="325.05" x2="933.40" y2="325.05" stroke="#1a1ae0" stroke-width="1.4" />
<line x1="930.40" y1="321.35" x2="930.40" y2="328.75" stroke="#1a1ae0" stroke-width="1.3" />
</g>
<rect x="490.90" y="0.00" width="2.20" height="463.00" fill="#0a84e6" />
<g clip-path="url(#c3)">
<clipPath id="c3"><rect x="933.9" y="0" width="440.80" height="463"/></clipPath>
<rect x="934.50" y="0.00" width="440.20" height="463.00" fill="#ffffff" />
<rect x="934.50" y="0.90" width="440.20" height="0.90" fill="#3a4656" />
<rect x="934.00" y="1.00" width="0.90" height="463.00" fill="#4a4a4a" />
<g transform="translate(939.50 5.90)"><path d="M2 3.4 C2.5 1.4 3.7 0.3 4.5 0 C5.3 0.3 6.5 1.4 7 3.4 L4.5 2.4Z" fill="#3f9a3f"/><path d="M0.2 5.2 C-0.5 8.8 1.6 11 4.4 11.2 L4.4 8.4 L2 4.4Z" fill="#d6ba1e"/><path d="M8.8 5.2 C9.5 8.8 7.4 11 4.6 11.2 L4.6 8.4 L7 4.4Z" fill="#1f80c8"/><ellipse cx="4.5" cy="5.9" rx="3" ry="3.7" fill="#fff" stroke="#a0a0a0" stroke-width="0.45"/><text class="u" x="0" y="0" font-size="6.6" font-weight="700" fill="#dc9c12" text-anchor="middle" transform="translate(4.5 8.25) scale(0.82 1)">5</text></g>
<text class="u" x="951.10" y="14.83" font-size="8.7" fill="#000000" textLength="322.60" lengthAdjust="spacingAndGlyphs" font-weight="350" >5986564 - GTCGlobalTrade-Server - Hedge - GTC Global Trade Capital Co. Limited - [XAUUSD.c,M5]</text>
<line x1="1358.40" y1="8.20" x2="1364.40" y2="15.00" stroke="#111" stroke-width="0.9" />
<line x1="1364.40" y1="8.20" x2="1358.40" y2="15.00" stroke="#111" stroke-width="0.9" />
<rect x="1333.50" y="8.2" width="5.4" height="6.6" fill="none" stroke="#111" stroke-width="0.9"/>
<line x1="1308.10" y1="11.80" x2="1314.10" y2="11.80" stroke="#111" stroke-width="0.9" />
<rect x="935.50" y="22.30" width="439.20" height="14.00" fill="#f0f0f0" />
<rect x="935.50" y="36.00" width="439.20" height="1.00" fill="#b4b4b4" />
<line x1="940.75" y1="24.60" x2="940.75" y2="34.20" stroke="#109010" stroke-width="0.9" />
<rect x="939.70" y="26" width="2.1" height="6.8" rx="0.6" fill="#f4fff4" stroke="#109010" stroke-width="0.9"/>
<line x1="944.15" y1="24.60" x2="944.15" y2="34.20" stroke="#109010" stroke-width="0.9" />
<rect x="943.10" y="26" width="2.1" height="6.8" rx="0.6" fill="#f4fff4" stroke="#109010" stroke-width="0.9"/>
<text class="u" x="952.50" y="32.43" font-size="8.7" fill="#000" textLength="21.30" lengthAdjust="spacingAndGlyphs" font-weight="350" >文件(F)</text>
<text class="u" x="986.10" y="32.43" font-size="8.7" fill="#000" textLength="22.10" lengthAdjust="spacingAndGlyphs" font-weight="350" >查看(V)</text>
<text class="u" x="1020.10" y="32.43" font-size="8.7" fill="#000" textLength="19.80" lengthAdjust="spacingAndGlyphs" font-weight="350" >插入(I)</text>
<text class="u" x="1052.40" y="32.43" font-size="8.7" fill="#000" textLength="22.30" lengthAdjust="spacingAndGlyphs" font-weight="350" >图表(C)</text>
<text class="u" x="1086.40" y="32.43" font-size="8.7" fill="#000" textLength="21.80" lengthAdjust="spacingAndGlyphs" font-weight="350" >工具(T)</text>
<text class="u" x="1120.60" y="32.43" font-size="8.7" fill="#000" textLength="24.10" lengthAdjust="spacingAndGlyphs" font-weight="350" >窗口(W)</text>
<text class="u" x="1157.10" y="32.43" font-size="8.7" fill="#000" textLength="22.40" lengthAdjust="spacingAndGlyphs" font-weight="350" >帮助(H)</text>
<rect x="1342.80" y="23.00" width="9.20" height="12.60" fill="#ffffff" />
<rect x="1353.40" y="23.00" width="9.20" height="12.60" fill="#ffffff" />
<rect x="1363.90" y="23.00" width="9.20" height="12.60" fill="#ffffff" />
<line x1="1345.90" y1="32.00" x2="1348.90" y2="32.00" stroke="#3b5a78" stroke-width="1" />
<rect x="1356.00" y="28.4" width="3" height="3" fill="none" stroke="#3b5a78" stroke-width="0.7"/>
<path d="M1357.00 28.2 v-1.2 h3.2 v3 h-1" fill="none" stroke="#3b5a78" stroke-width="0.7"/>
<line x1="1366.70" y1="26.80" x2="1370.30" y2="31.80" stroke="#3b5a78" stroke-width="1" />
<line x1="1370.30" y1="26.80" x2="1366.70" y2="31.80" stroke="#3b5a78" stroke-width="1" />
<rect x="935.50" y="37.00" width="439.20" height="21.00" fill="#f0f0f0" />
<rect x="936.80" y="39.50" width="0.80" height="0.90" fill="#9a9a9a" />
<rect x="936.80" y="41.50" width="0.80" height="0.90" fill="#9a9a9a" />
<rect x="936.80" y="43.50" width="0.80" height="0.90" fill="#9a9a9a" />
<rect x="936.80" y="45.50" width="0.80" height="0.90" fill="#9a9a9a" />
<rect x="936.80" y="47.50" width="0.80" height="0.90" fill="#9a9a9a" />
<rect x="936.80" y="49.50" width="0.80" height="0.90" fill="#9a9a9a" />
<rect x="936.80" y="51.50" width="0.80" height="0.90" fill="#9a9a9a" />
<rect x="936.80" y="53.50" width="0.80" height="0.90" fill="#9a9a9a" />
<rect x="936.80" y="55.50" width="0.80" height="0.90" fill="#9a9a9a" />
<line x1="942.80" y1="42.20" x2="942.80" y2="53.60" stroke="#cdcdcd" stroke-width="0.9" />
<line x1="942.50" y1="53.50" x2="951.60" y2="53.50" stroke="#858585" stroke-width="0.9" />
<path d="M943.70 47.6 l2.3 -2.1 l2.7 3.2 l2.6 -2.6" fill="none" stroke="#2f78c4" stroke-width="0.9"/>
<path d="M955.50 47.1 h4.2 l-2.1 2.9z" fill="#111"/>
<rect x="966.30" y="41.6" width="9.5" height="10.4" rx="1.5" fill="#fff" stroke="#2a70b4" stroke-width="1.2"/>
<path d="M967.90 45.6 l1.8 -1.5 l1.9 1 l2.6 -2.2" fill="none" stroke="#3a7cc0" stroke-width="0.7"/>
<rect x="967.80" y="47.20" width="1.10" height="2.50" fill="#38c048" />
<rect x="970.10" y="47.20" width="1.10" height="2.50" fill="#38c048" />
<rect x="972.70" y="47.20" width="1.10" height="2.50" fill="#38c048" />
<path d="M967.80 52.8 h6.5 l-0.7 1.6 h-5.1z" fill="#fff" stroke="#3a82c8" stroke-width="0.6"/>
<path d="M979.40 47.1 h4.2 l-2.1 2.9z" fill="#111"/>
<rect x="991.20" y="42.5" width="8.9" height="11" rx="1" fill="#ffd500" stroke="#e2aa00" stroke-width="0.7"/>
<text class="u" transform="translate(995.70 51.58) scale(0.8 1)" font-size="9.4" fill="#c49000" text-anchor="middle" font-weight="350" >$</text>
<line x1="1005.80" y1="39.20" x2="1005.80" y2="56.60" stroke="#bdbdbd" stroke-width="0.9" />
<text class="u" x="1011.50" y="50.72" font-size="8.4" fill="#2a6ab8" textLength="10.20" lengthAdjust="spacingAndGlyphs" font-weight="700" >IDE</text>
<path d="M1032.20 44.5 v-1.2 a2.3 1.8 0 0 1 4.6 0 v1.2" fill="none" stroke="#d79a00" stroke-width="0.8"/>
<path d="M1031.10 44.6 h6.8 l0.7 8.6 h-8.2z" fill="#f9c92a" stroke="#e3a400" stroke-width="0.6"/>
<circle cx="1052.00" cy="47.6" r="1.2" fill="none" stroke="#2f78c4" stroke-width="0.8"/>
<path d="M1050.20 45.20 a2.25 3 0 0 0 0 4.80" fill="none" stroke="#2f78c4" stroke-width="0.8"/>
<path d="M1053.80 45.20 a2.25 3 0 0 1 0 4.80" fill="none" stroke="#2f78c4" stroke-width="0.8"/>
<path d="M1049.00 43.60 a3.75 5 0 0 0 0 8.00" fill="none" stroke="#2f78c4" stroke-width="0.8"/>
<path d="M1055.00 43.60 a3.75 5 0 0 1 0 8.00" fill="none" stroke="#2f78c4" stroke-width="0.8"/>
<path d="M1067.00 49.5 a2 2 0 0 1 0.8 -3.8 a2.8 3 0 0 1 5.2 0 a2 2 0 0 1 0.6 3.8z" fill="#e4e4e4" stroke="#b8b8b8" stroke-width="0.7"/>
<line x1="1070.20" y1="50.00" x2="1070.20" y2="52.80" stroke="#b8b8b8" stroke-width="0.8" />
<line x1="1067.90" y1="53.00" x2="1072.50" y2="53.00" stroke="#b8b8b8" stroke-width="0.8" />
<path d="M1087.88 48.70 A1.30 1.79 0 1 1 1088.20 47.70" fill="none" stroke="#2f78c4" stroke-width="0.8"/>
<path d="M1089.00 50.20 A2.80 3.86 0 1 1 1089.70 47.70" fill="none" stroke="#2f78c4" stroke-width="0.8"/>
<path d="M1090.12 51.70 A4.30 5.93 0 1 1 1091.20 47.70" fill="none" stroke="#2f78c4" stroke-width="0.8"/>
<ellipse cx="1089.90" cy="51.00" rx="2.3" ry="2.8" fill="#2fbe3f" stroke="#fff" stroke-width="0.5"/>
<line x1="1088.60" y1="51.00" x2="1091.20" y2="51.00" stroke="#fff" stroke-width="0.7" />
<line x1="1089.90" y1="49.40" x2="1089.90" y2="52.60" stroke="#fff" stroke-width="0.7" />
<line x1="1098.70" y1="39.60" x2="1098.70" y2="56.00" stroke="#bdbdbd" stroke-width="0.9" />
<rect x="1100.70" y="38.6" width="44.8" height="17.8" fill="#d9e8f8" stroke="#c2d8f0" stroke-width="0.6"/>
<path d="M1105.50 44.2 v6.6 l4.8 -3.3z" fill="#fff" stroke="#18a018" stroke-width="0.9"/>
<text class="u" x="1115.10" y="50.73" font-size="8.7" fill="#000" textLength="28.00" lengthAdjust="spacingAndGlyphs" font-weight="350" >算法交易</text>
<path d="M1151.00 42.3 h4.4 l2 2 v8.6 h-6.4z" fill="#fff" stroke="#2f78c4" stroke-width="0.9"/>
<line x1="1154.20" y1="45.60" x2="1154.20" y2="50.40" stroke="#2f78c4" stroke-width="0.8" />
<path d="M1152.60 48.8 l1.6 1.8 l1.6 -1.8" fill="none" stroke="#2f78c4" stroke-width="0.8"/>
<text class="u" x="1161.50" y="50.73" font-size="8.7" fill="#000" textLength="19.80" lengthAdjust="spacingAndGlyphs" font-weight="350" >新订单</text>
<line x1="1186.90" y1="39.60" x2="1186.90" y2="56.00" stroke="#bdbdbd" stroke-width="0.9" />
<line x1="1196.40" y1="45.50" x2="1196.40" y2="53.00" stroke="#6fcc6f" stroke-width="0.8" />
<line x1="1194.00" y1="51.40" x2="1196.40" y2="51.40" stroke="#18a018" stroke-width="0.9" />
<line x1="1196.40" y1="47.60" x2="1198.00" y2="47.60" stroke="#6fcc6f" stroke-width="0.8" />
<line x1="1201.00" y1="41.50" x2="1201.00" y2="50.50" stroke="#18a018" stroke-width="1.2" />
<line x1="1201.00" y1="49.00" x2="1203.60" y2="49.00" stroke="#18a018" stroke-width="1.1" />
<line x1="1198.80" y1="44.40" x2="1201.00" y2="44.40" stroke="#18a018" stroke-width="1.1" />
<rect x="1208.10" y="38.6" width="15.8" height="17.8" fill="#d9e8f8" stroke="#c2d8f0" stroke-width="0.6"/>
<line x1="1213.20" y1="41.80" x2="1213.20" y2="53.60" stroke="#18a018" stroke-width="0.9" />
<rect x="1212.10" y="43.6" width="2.2" height="8" fill="#e6f6e6" stroke="#18a018" stroke-width="0.9"/>
<line x1="1218.00" y1="41.80" x2="1218.00" y2="53.60" stroke="#18a018" stroke-width="0.9" />
<rect x="1216.90" y="43.6" width="2.2" height="8" fill="#e6f6e6" stroke="#18a018" stroke-width="0.9"/>
<path d="M1229.30 49.5 l1.6 -1.5 l1.4 1.6 l1.6 -5 l1.6 6.6 l1.6 -4.2 l1.4 1.4 l1 -1" fill="none" stroke="#18a018" stroke-width="0.9"/>
<line x1="1244.10" y1="39.60" x2="1244.10" y2="56.00" stroke="#bdbdbd" stroke-width="0.9" />
<ellipse cx="1253.90" cy="46.3" rx="3.3" ry="4" fill="#fff" stroke="#2f78c4" stroke-width="1"/>
<line x1="1256.20" y1="49.30" x2="1259.30" y2="53.30" stroke="#2f78c4" stroke-width="1.1" />
<line x1="1252.20" y1="46.30" x2="1255.60" y2="46.30" stroke="#2f78c4" stroke-width="0.9" />
<line x1="1253.90" y1="44.20" x2="1253.90" y2="48.40" stroke="#2f78c4" stroke-width="0.9" />
<ellipse cx="1271.50" cy="46.3" rx="3.3" ry="4" fill="#fff" stroke="#2f78c4" stroke-width="1"/>
<line x1="1273.80" y1="49.30" x2="1276.90" y2="53.30" stroke="#2f78c4" stroke-width="1.1" />
<line x1="1269.80" y1="46.30" x2="1273.20" y2="46.30" stroke="#2f78c4" stroke-width="0.9" />
<line x1="1284.80" y1="43.00" x2="1284.80" y2="52.60" stroke="#2f78c4" stroke-width="0.9" />
<ellipse cx="1296.10" cy="46.6" rx="2.9" ry="3.6" fill="none" stroke="#333" stroke-width="1"/>
<line x1="1298.10" y1="49.40" x2="1300.30" y2="52.40" stroke="#333" stroke-width="1" />
<ellipse cx="1313.90" cy="48.6" rx="3.2" ry="4" fill="#f6f6f6" stroke="#555" stroke-width="0.8"/>
<path d="M1312.30 49 l1.6 1.6 l1.8 -2.6" fill="none" stroke="#777" stroke-width="0.6"/>
<ellipse cx="1317.90" cy="45.9" rx="4.2" ry="5.2" fill="#e2331f"/>
<text class="u" transform="translate(1317.90 48.74) scale(0.8 1)" font-size="7.6" fill="#fff" text-anchor="middle" font-weight="350" >1</text>
<path d="M1334.50 41.4 l2 2 l-2 2 l-2 -2z" fill="#18a018"/>
<line x1="1334.50" y1="45.00" x2="1334.50" y2="48.40" stroke="#18a018" stroke-width="0.8" />
<text class="u" transform="translate(1334.50 52.30) scale(0.9 1)" font-size="3.6" fill="#18a018" text-anchor="middle" font-weight="700" >LVL</text>
<rect x="1343.10" y="43.4" width="27" height="9.2" fill="#fff" stroke="#a9a9a9" stroke-width="0.8"/>
<rect x="1343.70" y="44.00" width="4.00" height="8.00" fill="#2fd02f" />
<rect x="935.00" y="58.00" width="439.70" height="166.70" fill="#000" />
<rect x="936.00" y="59.05" width="410.00" height="0.90" fill="#a8a8a8" />
<rect x="936.10" y="59.40" width="0.90" height="151.40" fill="#b8b8b8" />
<line x1="1346.00" y1="59.20" x2="1346.00" y2="210.80" stroke="#d8d8d8" stroke-width="0.9" />
<line x1="935.00" y1="210.40" x2="1346.00" y2="210.40" stroke="#d8d8d8" stroke-width="0.9" />
<line x1="1346.00" y1="77.00" x2="1348.00" y2="77.00" stroke="#d8d8d8" stroke-width="0.8" />
<text class="c" x="1348.60" y="79.34" font-size="6.5" fill="#cccccc" textLength="19.10" lengthAdjust="spacingAndGlyphs" >5045.40</text>
<line x1="1346.00" y1="99.20" x2="1348.00" y2="99.20" stroke="#d8d8d8" stroke-width="0.8" />
<text class="c" x="1348.60" y="101.54" font-size="6.5" fill="#cccccc" textLength="19.10" lengthAdjust="spacingAndGlyphs" >5011.80</text>
<line x1="1346.00" y1="121.40" x2="1348.00" y2="121.40" stroke="#d8d8d8" stroke-width="0.8" />
<text class="c" x="1348.60" y="123.74" font-size="6.5" fill="#cccccc" textLength="19.10" lengthAdjust="spacingAndGlyphs" >4978.20</text>
<line x1="1346.00" y1="143.50" x2="1348.00" y2="143.50" stroke="#d8d8d8" stroke-width="0.8" />
<text class="c" x="1348.60" y="145.84" font-size="6.5" fill="#cccccc" textLength="19.10" lengthAdjust="spacingAndGlyphs" >4944.60</text>
<line x1="1346.00" y1="165.70" x2="1348.00" y2="165.70" stroke="#d8d8d8" stroke-width="0.8" />
<text class="c" x="1348.60" y="168.04" font-size="6.5" fill="#cccccc" textLength="19.10" lengthAdjust="spacingAndGlyphs" >4911.00</text>
<line x1="1346.00" y1="187.90" x2="1348.00" y2="187.90" stroke="#d8d8d8" stroke-width="0.8" />
<text class="c" x="1348.60" y="190.24" font-size="6.5" fill="#cccccc" textLength="19.10" lengthAdjust="spacingAndGlyphs" >4877.40</text>
<text class="c" x="936.70" y="219.08" font-size="6.6" fill="#e0e0e0" textLength="24.60" lengthAdjust="spacingAndGlyphs" >4 Feb 2026</text>
<line x1="971.90" y1="210.40" x2="971.90" y2="212.40" stroke="#d8d8d8" stroke-width="0.8" />
<text class="c" x="972.50" y="219.08" font-size="6.6" fill="#e0e0e0" textLength="27.20" lengthAdjust="spacingAndGlyphs" >4 Feb 16:20</text>
<line x1="1007.30" y1="210.40" x2="1007.30" y2="212.40" stroke="#d8d8d8" stroke-width="0.8" />
<text class="c" x="1007.90" y="219.08" font-size="6.6" fill="#e0e0e0" textLength="27.20" lengthAdjust="spacingAndGlyphs" >4 Feb 16:40</text>
<line x1="1042.70" y1="210.40" x2="1042.70" y2="212.40" stroke="#d8d8d8" stroke-width="0.8" />
<text class="c" x="1043.30" y="219.08" font-size="6.6" fill="#e0e0e0" textLength="27.20" lengthAdjust="spacingAndGlyphs" >4 Feb 17:00</text>
<line x1="1078.10" y1="210.40" x2="1078.10" y2="212.40" stroke="#d8d8d8" stroke-width="0.8" />
<text class="c" x="1078.70" y="219.08" font-size="6.6" fill="#e0e0e0" textLength="27.20" lengthAdjust="spacingAndGlyphs" >4 Feb 17:20</text>
<line x1="1113.50" y1="210.40" x2="1113.50" y2="212.40" stroke="#d8d8d8" stroke-width="0.8" />
<text class="c" x="1114.10" y="219.08" font-size="6.6" fill="#e0e0e0" textLength="27.20" lengthAdjust="spacingAndGlyphs" >4 Feb 17:40</text>
<line x1="1148.90" y1="210.40" x2="1148.90" y2="212.40" stroke="#d8d8d8" stroke-width="0.8" />
<text class="c" x="1149.50" y="219.08" font-size="6.6" fill="#e0e0e0" textLength="27.20" lengthAdjust="spacingAndGlyphs" >4 Feb 18:00</text>
<line x1="1184.30" y1="210.40" x2="1184.30" y2="212.40" stroke="#d8d8d8" stroke-width="0.8" />
<text class="c" x="1184.90" y="219.08" font-size="6.6" fill="#e0e0e0" textLength="27.20" lengthAdjust="spacingAndGlyphs" >4 Feb 18:20</text>
<line x1="1219.70" y1="210.40" x2="1219.70" y2="212.40" stroke="#d8d8d8" stroke-width="0.8" />
<text class="c" x="1220.30" y="219.08" font-size="6.6" fill="#e0e0e0" textLength="27.20" lengthAdjust="spacingAndGlyphs" >4 Feb 18:40</text>
<line x1="1255.10" y1="210.40" x2="1255.10" y2="212.40" stroke="#d8d8d8" stroke-width="0.8" />
<text class="c" x="1255.70" y="219.08" font-size="6.6" fill="#e0e0e0" textLength="27.20" lengthAdjust="spacingAndGlyphs" >4 Feb 19:00</text>
<line x1="1290.50" y1="210.40" x2="1290.50" y2="212.40" stroke="#d8d8d8" stroke-width="0.8" />
<text class="c" x="1291.10" y="219.08" font-size="6.6" fill="#e0e0e0" textLength="27.20" lengthAdjust="spacingAndGlyphs" >4 Feb 19:20</text>
<line x1="1080.50" y1="172.40" x2="1346.00" y2="172.40" stroke="#39434f" stroke-width="1.1" />
<line x1="1082.40" y1="172.40" x2="1346.00" y2="172.40" stroke="#e23c48" stroke-width="1" stroke-dasharray="5.2 2.7 2.2 2.9"/>
<line x1="1082.40" y1="174.30" x2="1346.00" y2="174.30" stroke="#22c022" stroke-width="1" stroke-dasharray="1.9 1.35"/>
<line x1="1082.40" y1="176.40" x2="1346.00" y2="176.40" stroke="#22c022" stroke-width="1" stroke-dasharray="1.9 1.35"/>
<line x1="1082.40" y1="179.10" x2="1346.00" y2="179.10" stroke="#22c022" stroke-width="1" stroke-dasharray="1.9 1.35"/>
<line x1="1082.40" y1="178.40" x2="1346.00" y2="178.40" stroke="#f01010" stroke-width="1" stroke-dasharray="5.2 2.7 2.2 2.9"/>
<line x1="935.80" y1="172.40" x2="940.20" y2="172.40" stroke="#e03c48" stroke-width="0.9" />
<line x1="935.80" y1="174.30" x2="940.20" y2="174.30" stroke="#22c022" stroke-width="0.9" stroke-dasharray="1.9 1.35"/>
<line x1="935.80" y1="176.40" x2="940.20" y2="176.40" stroke="#22c022" stroke-width="0.9" stroke-dasharray="1.9 1.35"/>
<line x1="935.80" y1="179.10" x2="940.20" y2="179.10" stroke="#22c022" stroke-width="0.9" stroke-dasharray="1.9 1.35"/>
<line x1="935.80" y1="178.40" x2="940.20" y2="178.40" stroke="#f01010" stroke-width="0.9" />
<rect x="940.30" y="165.00" width="1.30" height="10.60" fill="#e0e0e0" />
<line x1="1080.90" y1="121.10" x2="1080.90" y2="129.80" stroke="#10e010" stroke-width="1" />
<line x1="1086.90" y1="122.60" x2="1086.90" y2="138.80" stroke="#10e010" stroke-width="1" />
<rect x="1084.30" y="129.40" width="5.2" height="5.30" fill="#fff" stroke="#10e010" stroke-width="0.9"/>
<line x1="1095.77" y1="131.40" x2="1095.77" y2="163.40" stroke="#10e010" stroke-width="1" />
<rect x="1093.17" y="134.30" width="5.2" height="25.20" fill="#fff" stroke="#10e010" stroke-width="0.9"/>
<line x1="1104.64" y1="154.30" x2="1104.64" y2="180.90" stroke="#10e010" stroke-width="1" />
<rect x="1102.04" y="159.50" width="5.2" height="5.30" fill="#fff" stroke="#10e010" stroke-width="0.9"/>
<line x1="1113.51" y1="141.10" x2="1113.51" y2="168.30" stroke="#10e010" stroke-width="1" />
<rect x="1110.91" y="143.20" width="5.2" height="21.40" fill="#000" stroke="#10e010" stroke-width="0.8"/>
<line x1="1122.38" y1="140.10" x2="1122.38" y2="151.20" stroke="#10e010" stroke-width="1" />
<rect x="1119.78" y="143.40" width="5.2" height="5.10" fill="#fff" stroke="#10e010" stroke-width="0.9"/>
<line x1="1131.25" y1="142.00" x2="1131.25" y2="152.70" stroke="#10e010" stroke-width="1" />
<line x1="1128.25" y1="148.00" x2="1134.25" y2="148.00" stroke="#10e010" stroke-width="1" />
<line x1="1140.12" y1="140.10" x2="1140.12" y2="166.00" stroke="#10e010" stroke-width="1" />
<rect x="1137.52" y="147.90" width="5.2" height="11.60" fill="#fff" stroke="#10e010" stroke-width="0.9"/>
<line x1="1148.99" y1="158.20" x2="1148.99" y2="176.00" stroke="#10e010" stroke-width="1" />
<rect x="1146.39" y="159.50" width="5.2" height="6.80" fill="#fff" stroke="#10e010" stroke-width="0.9"/>
<line x1="1157.86" y1="156.00" x2="1157.86" y2="168.30" stroke="#10e010" stroke-width="1" />
<rect x="1155.26" y="158.40" width="5.2" height="7.70" fill="#000" stroke="#10e010" stroke-width="0.8"/>
<line x1="1166.73" y1="145.90" x2="1166.73" y2="162.80" stroke="#10e010" stroke-width="1" />
<rect x="1164.13" y="152.00" width="5.2" height="6.40" fill="#000" stroke="#10e010" stroke-width="0.8"/>
<line x1="1175.60" y1="148.90" x2="1175.60" y2="164.80" stroke="#10e010" stroke-width="1" />
<rect x="1173.00" y="151.80" width="5.2" height="11.60" fill="#fff" stroke="#10e010" stroke-width="0.9"/>
<line x1="1184.47" y1="163.40" x2="1184.47" y2="172.60" stroke="#10e010" stroke-width="1" />
<rect x="1181.87" y="163.40" width="5.2" height="9.20" fill="#fff" stroke="#10e010" stroke-width="0.9"/>
<line x1="1193.34" y1="155.10" x2="1193.34" y2="175.10" stroke="#10e010" stroke-width="1" />
<rect x="1190.74" y="156.40" width="5.2" height="16.00" fill="#000" stroke="#10e010" stroke-width="0.8"/>
<line x1="1202.21" y1="149.80" x2="1202.21" y2="163.40" stroke="#10e010" stroke-width="1" />
<line x1="1199.21" y1="156.60" x2="1205.21" y2="156.60" stroke="#10e010" stroke-width="1" />
<line x1="1211.08" y1="154.30" x2="1211.08" y2="166.40" stroke="#10e010" stroke-width="1" />
<rect x="1208.48" y="157.00" width="5.2" height="9.40" fill="#fff" stroke="#10e010" stroke-width="0.9"/>
<line x1="1219.95" y1="166.40" x2="1219.95" y2="175.60" stroke="#10e010" stroke-width="1" />
<rect x="1217.35" y="166.40" width="5.2" height="9.20" fill="#fff" stroke="#10e010" stroke-width="0.9"/>
<line x1="1228.82" y1="171.80" x2="1228.82" y2="205.80" stroke="#10e010" stroke-width="1" />
<rect x="1226.22" y="175.10" width="5.2" height="17.50" fill="#fff" stroke="#10e010" stroke-width="0.9"/>
<line x1="1237.69" y1="168.30" x2="1237.69" y2="192.60" stroke="#10e010" stroke-width="1" />
<rect x="1235.09" y="172.40" width="5.2" height="20.00" fill="#000" stroke="#10e010" stroke-width="0.8"/>
<line x1="1246.56" y1="166.30" x2="1246.56" y2="172.70" stroke="#10e010" stroke-width="1" />
<rect x="1243.96" y="170.40" width="5.2" height="2.10" fill="#000" stroke="#10e010" stroke-width="0.8"/>
<line x1="1255.43" y1="163.00" x2="1255.43" y2="178.60" stroke="#10e010" stroke-width="1" />
<rect x="1252.83" y="163.60" width="5.2" height="7.00" fill="#000" stroke="#10e010" stroke-width="0.8"/>
<line x1="1264.30" y1="162.00" x2="1264.30" y2="175.70" stroke="#10e010" stroke-width="1" />
<rect x="1261.70" y="164.00" width="5.2" height="5.80" fill="#fff" stroke="#10e010" stroke-width="0.9"/>
<line x1="1273.17" y1="158.20" x2="1273.17" y2="174.30" stroke="#10e010" stroke-width="1" />
<rect x="1270.57" y="159.00" width="5.2" height="11.20" fill="#000" stroke="#10e010" stroke-width="0.8"/>
<line x1="1282.04" y1="155.80" x2="1282.04" y2="167.90" stroke="#10e010" stroke-width="1" />
<rect x="1279.44" y="159.10" width="5.2" height="8.80" fill="#fff" stroke="#10e010" stroke-width="0.9"/>
<line x1="1290.91" y1="161.10" x2="1290.91" y2="173.10" stroke="#10e010" stroke-width="1" />
<rect x="1288.31" y="167.90" width="5.2" height="1.50" fill="#fff" stroke="#10e010" stroke-width="0.9"/>
<line x1="1299.78" y1="169.40" x2="1299.78" y2="180.50" stroke="#10e010" stroke-width="1" />
<rect x="1297.18" y="169.40" width="5.2" height="3.00" fill="#fff" stroke="#10e010" stroke-width="0.9"/>
<rect x="1346.80" y="168.80" width="22.00" height="7.90" fill="#8aa2c2" />
<text class="c" x="1348.60" y="175.08" font-size="6.6" fill="#0c141e" textLength="19.30" lengthAdjust="spacingAndGlyphs" >4900.08</text>
<rect x="1239.70" y="58.70" width="54.40" height="5.40" fill="#f01414" />
<path d="M1294.20 59.2 h4.8 l-2.4 3.8z" fill="#9fb2c6"/>
<text class="c" x="1312.40" y="69.80" font-size="6.4" fill="#e8e8e8" textLength="19.80" lengthAdjust="spacingAndGlyphs" >MADING</text>
<path d="M1335.80 66.4 l4 -2 l4 2 l-4 2z" fill="#3f9be8"/>
<path d="M1337.40 67.6 v2.2 a2.4 1.2 0 0 0 4.8 0 v-2.2 l-2.4 1.2z" fill="#2b7fd0"/>
<line x1="1336.20" y1="66.60" x2="1336.20" y2="70.40" stroke="#3f9be8" stroke-width="0.6" />
<rect x="939.00" y="63.40" width="8.30" height="7.40" fill="#fff" />
<rect x="939.00" y="63.40" width="0.70" height="7.40" fill="#b42020" />
<rect x="946.60" y="63.40" width="0.70" height="7.40" fill="#1d5fb0" />
<rect x="939.00" y="63.40" width="4.10" height="0.80" fill="#b42020" />
<rect x="943.10" y="63.40" width="4.20" height="0.80" fill="#1d5fb0" />
<rect x="940.50" y="64.90" width="2.20" height="1.00" fill="#e03c3c" />
<rect x="943.60" y="64.90" width="2.90" height="1.00" fill="#2f7ad0" />
<rect x="940.50" y="66.95" width="2.20" height="1.00" fill="#e03c3c" />
<rect x="943.60" y="66.95" width="2.90" height="1.00" fill="#2f7ad0" />
<rect x="940.50" y="69.00" width="2.20" height="1.00" fill="#e03c3c" />
<rect x="943.60" y="69.00" width="2.90" height="1.00" fill="#2f7ad0" />
<rect x="950.50" y="63.40" width="4.00" height="7.50" fill="#e25050" />
<rect x="951.70" y="67.00" width="2.00" height="3.50" fill="#fbdcdc" />
<rect x="955.30" y="63.40" width="3.30" height="7.50" fill="#2a7ad4" />
<rect x="956.10" y="67.00" width="1.90" height="3.90" fill="#cfe4fa" />
<rect x="953.30" y="64.10" width="2.60" height="0.90" fill="#e4e4e4" />
<rect x="954.70" y="63.40" width="1.40" height="3.20" fill="#0c1c3c" />
<text class="c" x="961.90" y="69.78" font-size="6.6" fill="#e8e8e8" textLength="92.60" lengthAdjust="spacingAndGlyphs" >XAUUSD.c, M5:  Gold vs US Dollar / Spot</text>
<rect x="936.40" y="71.00" width="3.20" height="4.90" fill="#16e016" />
<rect x="936.70" y="71.80" width="2.00" height="3.30" fill="#fff" />
<line x1="945.00" y1="71.00" x2="945.00" y2="74.00" stroke="#0a9a0a" stroke-width="0.8" />
<rect x="962.50" y="73.00" width="0.90" height="0.90" fill="#10c010" />
<rect x="942.80" y="75.40" width="137.60" height="15.20" fill="#202020" />
<text class="p" transform="translate(945.20 87.14) scale(0.63 1)" x="0.00 6.98 13.97" font-size="11.77" fill="#e0e000" font-weight="400">===</text>
<text class="p" x="962.80" y="86.72" font-size="10.6" fill="#e0e000" textLength="35.20" lengthAdjust="spacingAndGlyphs" font-weight="500" >策略状态</text>
<text class="p" transform="translate(1002.40 87.14) scale(0.63 1)" x="0.00 6.98 13.97" font-size="11.77" fill="#e0e000" font-weight="400">===</text>
<text class="p" x="945.20" y="99.77" font-size="8.8" fill="#10e010" textLength="51.10" lengthAdjust="spacingAndGlyphs" font-weight="700" >当日已平仓金额</text>
<text class="p" transform="translate(996.30 100.12) scale(0.63 1)" x="0.00" font-size="9.77" fill="#10e010" font-weight="700">:</text>
<text class="p" transform="translate(1003.60 100.12) scale(0.63 1)" x="0.00 5.79 11.59 17.38 23.17 28.97 34.76" font-size="9.77" fill="#10e010" font-weight="700">3700.79</text>
<text class="p" x="945.20" y="113.61" font-size="8.8" fill="#f4f4f4" textLength="29.20" lengthAdjust="spacingAndGlyphs" font-weight="350" >趋势状态</text>
<text class="p" transform="translate(974.40 113.96) scale(0.63 1)" x="0.00" font-size="9.77" fill="#f4f4f4">:</text>
<text class="p" x="981.70" y="113.61" font-size="8.8" fill="#f4f4f4" textLength="29.20" lengthAdjust="spacingAndGlyphs" font-weight="350" >震荡行情</text>
<text class="p" x="945.20" y="127.45" font-size="8.8" fill="#0c960c" textLength="29.20" lengthAdjust="spacingAndGlyphs" font-weight="350" >时间状态</text>
<text class="p" transform="translate(974.40 127.80) scale(0.63 1)" x="0.00" font-size="9.77" fill="#0c960c">:</text>
<text class="p" x="981.70" y="127.45" font-size="8.8" fill="#0c960c" textLength="29.20" lengthAdjust="spacingAndGlyphs" font-weight="350" >交易时间</text>
<text class="p" transform="translate(945.20 141.64) scale(0.63 1)" x="0.00 5.79 11.59 17.38" font-size="9.77" fill="#c4d0dc">RSI:</text>
<text class="p" transform="translate(963.45 141.64) scale(0.63 1)" x="0.00 5.79 11.59 17.38 23.17" font-size="9.77" fill="#c4d0dc">39.07</text>
<text class="p" transform="translate(985.35 141.64) scale(0.63 1)" x="0.00" font-size="9.77" fill="#c4d0dc">(</text>
<text class="p" x="989.00" y="141.29" font-size="8.8" fill="#c4d0dc" textLength="14.60" lengthAdjust="spacingAndGlyphs" font-weight="350" >偏空</text>
<text class="p" transform="translate(1003.60 141.64) scale(0.63 1)" x="0.00" font-size="9.77" fill="#c4d0dc">)</text>
<text class="p" x="945.20" y="155.13" font-size="8.8" fill="#0c960c" textLength="29.20" lengthAdjust="spacingAndGlyphs" font-weight="350" >多单允许</text>
<text class="p" transform="translate(974.40 155.48) scale(0.63 1)" x="0.00" font-size="9.77" fill="#0c960c">:</text>
<text class="p" x="981.70" y="155.13" font-size="8.8" fill="#0c960c" textLength="7.30" lengthAdjust="spacingAndGlyphs" font-weight="350" >是</text>
<text class="p" x="945.20" y="168.97" font-size="8.8" fill="#0c960c" textLength="29.20" lengthAdjust="spacingAndGlyphs" font-weight="350" >空单允许</text>
<text class="p" transform="translate(974.40 169.32) scale(0.63 1)" x="0.00" font-size="9.77" fill="#0c960c">:</text>
<text class="p" x="981.70" y="168.97" font-size="8.8" fill="#0c960c" textLength="7.30" lengthAdjust="spacingAndGlyphs" font-weight="350" >是</text>
<text class="p" x="945.20" y="182.81" font-size="8.8" fill="#f4f4f4" textLength="14.60" lengthAdjust="spacingAndGlyphs" font-weight="350" >持仓</text>
<text class="p" transform="translate(959.80 183.16) scale(0.63 1)" x="0.00" font-size="9.77" fill="#f4f4f4">:</text>
<text class="p" x="967.10" y="182.81" font-size="8.8" fill="#f4f4f4" textLength="7.30" lengthAdjust="spacingAndGlyphs" font-weight="350" >多</text>
<text class="p" transform="translate(974.40 183.16) scale(0.63 1)" x="0.00 5.79 11.59 17.38 23.17" font-size="9.77" fill="#f4f4f4">=0.01</text>
<text class="p" x="996.30" y="182.81" font-size="8.8" fill="#f4f4f4" textLength="7.30" lengthAdjust="spacingAndGlyphs" font-weight="350" >空</text>
<text class="p" transform="translate(1003.60 183.16) scale(0.63 1)" x="0.00 5.79 11.59 17.38 23.17" font-size="9.77" fill="#f4f4f4">=0.04</text>
<text class="p" x="945.20" y="196.65" font-size="8.8" fill="#f01010" textLength="36.50" lengthAdjust="spacingAndGlyphs" font-weight="700" >持仓总盈亏</text>
<text class="p" transform="translate(981.70 197.00) scale(0.63 1)" x="0.00" font-size="9.77" fill="#f01010" font-weight="700">:</text>
<text class="p" transform="translate(989.00 197.00) scale(0.63 1)" x="0.00 5.79 11.59 17.38 23.17 28.97" font-size="9.77" fill="#f01010" font-weight="700">-17.33</text>
<text class="p" x="945.20" y="208.57" font-size="6.8" fill="#5c5c5c" textLength="23.36" lengthAdjust="spacingAndGlyphs" font-weight="350" >更新时间</text>
<text class="p" transform="translate(968.56 208.84) scale(0.63 1)" x="0.00" font-size="7.55" fill="#5c5c5c">:</text>
<text class="p" transform="translate(974.40 208.84) scale(0.63 1)" x="0.00 4.63 9.27 13.90 18.54 23.17 27.81 32.44" font-size="7.55" fill="#5c5c5c">19:27:47</text>
<rect x="935.50" y="224.70" width="439.20" height="3.00" fill="#f7f7f7" />
<rect x="935.50" y="227.10" width="439.20" height="0.80" fill="#b6b6b6" />
<rect x="935.50" y="227.60" width="8.60" height="235.40" fill="#c0cede" />
<line x1="938.50" y1="233.90" x2="941.90" y2="238.30" stroke="#111" stroke-width="1.2" />
<line x1="941.90" y1="233.90" x2="938.50" y2="238.30" stroke="#111" stroke-width="1.2" />
<rect x="944.10" y="258.95" width="430.60" height="0.70" fill="#d4d4d4" />
<rect x="944.10" y="259.35" width="430.60" height="14.45" fill="#ececec" />
<rect x="944.10" y="273.40" width="430.60" height="0.70" fill="#d4d4d4" />
<rect x="944.10" y="287.85" width="430.60" height="0.70" fill="#d4d4d4" />
<rect x="944.10" y="288.25" width="430.60" height="14.45" fill="#ececec" />
<rect x="944.10" y="302.30" width="430.60" height="0.70" fill="#d4d4d4" />
<rect x="944.10" y="316.75" width="430.60" height="0.70" fill="#d4d4d4" />
<rect x="944.10" y="317.25" width="430.60" height="15.25" fill="#cbcbcb" />
<line x1="1000.30" y1="228.60" x2="1000.30" y2="317.15" stroke="#d4d4d4" stroke-width="0.9" />
<line x1="1000.30" y1="228.60" x2="1000.30" y2="244.90" stroke="#b9b9b9" stroke-width="0.9" />
<line x1="1065.30" y1="228.60" x2="1065.30" y2="317.15" stroke="#d4d4d4" stroke-width="0.9" />
<line x1="1065.30" y1="228.60" x2="1065.30" y2="244.90" stroke="#b9b9b9" stroke-width="0.9" />
<line x1="1108.30" y1="228.60" x2="1108.30" y2="317.15" stroke="#d4d4d4" stroke-width="0.9" />
<line x1="1108.30" y1="228.60" x2="1108.30" y2="244.90" stroke="#b9b9b9" stroke-width="0.9" />
<line x1="1151.40" y1="228.60" x2="1151.40" y2="317.15" stroke="#d4d4d4" stroke-width="0.9" />
<line x1="1151.40" y1="228.60" x2="1151.40" y2="244.90" stroke="#b9b9b9" stroke-width="0.9" />
<line x1="1194.10" y1="228.60" x2="1194.10" y2="317.15" stroke="#d4d4d4" stroke-width="0.9" />
<line x1="1194.10" y1="228.60" x2="1194.10" y2="244.90" stroke="#b9b9b9" stroke-width="0.9" />
<line x1="1238.00" y1="228.60" x2="1238.00" y2="317.15" stroke="#d4d4d4" stroke-width="0.9" />
<line x1="1238.00" y1="228.60" x2="1238.00" y2="244.90" stroke="#b9b9b9" stroke-width="0.9" />
<line x1="1281.00" y1="228.60" x2="1281.00" y2="317.15" stroke="#d4d4d4" stroke-width="0.9" />
<line x1="1281.00" y1="228.60" x2="1281.00" y2="244.90" stroke="#b9b9b9" stroke-width="0.9" />
<line x1="1324.20" y1="228.60" x2="1324.20" y2="317.15" stroke="#d4d4d4" stroke-width="0.9" />
<line x1="1324.20" y1="228.60" x2="1324.20" y2="244.90" stroke="#b9b9b9" stroke-width="0.9" />
<text class="u" x="948.90" y="239.53" font-size="8.7" fill="#000" textLength="26.00" lengthAdjust="spacingAndGlyphs" font-weight="400" >交易品种</text>
<path d="M984.60 237.6 h4 l-2 -2.6z" fill="#222"/>
<text class="u" x="1062.30" y="239.53" font-size="8.7" fill="#000" textLength="12.90" lengthAdjust="spacingAndGlyphs" text-anchor="end" font-weight="400" >时间</text>
<text class="u" x="1105.30" y="239.53" font-size="8.7" fill="#000" textLength="12.90" lengthAdjust="spacingAndGlyphs" text-anchor="end" font-weight="400" >类型</text>
<text class="u" x="1148.20" y="239.53" font-size="8.7" fill="#000" textLength="19.90" lengthAdjust="spacingAndGlyphs" text-anchor="end" font-weight="400" >交易量</text>
<text class="u" x="1190.90" y="239.53" font-size="8.7" fill="#000" textLength="12.90" lengthAdjust="spacingAndGlyphs" text-anchor="end" font-weight="400" >价位</text>
<text class="u" x="1235.40" y="239.53" font-size="8.7" fill="#000" textLength="12.90" lengthAdjust="spacingAndGlyphs" text-anchor="end" font-weight="400" >止损</text>
<text class="u" x="1278.10" y="239.53" font-size="8.7" fill="#000" textLength="12.90" lengthAdjust="spacingAndGlyphs" text-anchor="end" font-weight="400" >止盈</text>
<text class="u" x="1321.20" y="239.53" font-size="8.7" fill="#000" textLength="12.90" lengthAdjust="spacingAndGlyphs" text-anchor="end" font-weight="400" >价位</text>
<text class="u" x="1370.90" y="239.53" font-size="8.7" fill="#000" textLength="12.60" lengthAdjust="spacingAndGlyphs" text-anchor="end" font-weight="400" >盈利</text>
<rect x="948.00" y="248.00" width="4.6" height="9.4" rx="1" fill="#fff" stroke="#e04848" stroke-width="0.8"/>
<rect x="949.90" y="250.50" width="0.90" height="1.00" fill="#e04848" />
<rect x="949.90" y="252.70" width="0.90" height="1.00" fill="#e04848" />
<text class="u" x="956.50" y="256.03" font-size="8.7" fill="#000" textLength="27.60" lengthAdjust="spacingAndGlyphs" font-weight="400" >xauusd.c</text>
<text class="u" x="1003.30" y="256.03" font-size="8.7" fill="#000" textLength="60.30" lengthAdjust="spacingAndGlyphs" font-weight="400" >2026.02.04 19:27:...</text>
<text class="u" x="1106.70" y="256.03" font-size="8.7" fill="#000" textLength="9.60" lengthAdjust="spacingAndGlyphs" text-anchor="end" font-weight="400" >sell</text>
<text class="u" x="1149.20" y="256.03" font-size="8.7" fill="#000" textLength="11.80" lengthAdjust="spacingAndGlyphs" text-anchor="end" font-weight="400" >0.01</text>
<text class="u" x="1192.60" y="256.03" font-size="8.7" fill="#000" textLength="24.40" lengthAdjust="spacingAndGlyphs" text-anchor="end" font-weight="400" >4889.92</text>
<text class="u" x="1268.20" y="256.03" font-size="8.7" fill="#000" textLength="24.40" lengthAdjust="spacingAndGlyphs" text-anchor="end" font-weight="400" >4892.52</text>
<line x1="1274.30" y1="250.30" x2="1278.10" y2="255.50" stroke="#808080" stroke-width="1.05" />
<line x1="1278.10" y1="250.30" x2="1274.30" y2="255.50" stroke="#808080" stroke-width="1.05" />
<text class="u" x="1321.80" y="256.03" font-size="8.7" fill="#000" textLength="24.40" lengthAdjust="spacingAndGlyphs" text-anchor="end" font-weight="400" >4900.47</text>
<text class="u" x="1360.90" y="256.03" font-size="8.7" fill="#f01818" textLength="18.70" lengthAdjust="spacingAndGlyphs" text-anchor="end" font-weight="400" >-10.55</text>
<line x1="1366.60" y1="250.30" x2="1370.40" y2="255.50" stroke="#808080" stroke-width="1.05" />
<line x1="1370.40" y1="250.30" x2="1366.60" y2="255.50" stroke="#808080" stroke-width="1.05" />
<rect x="948.00" y="262.45" width="4.6" height="9.4" rx="1" fill="#fff" stroke="#e04848" stroke-width="0.8"/>
<rect x="949.90" y="264.95" width="0.90" height="1.00" fill="#e04848" />
<rect x="949.90" y="267.15" width="0.90" height="1.00" fill="#e04848" />
<text class="u" x="956.50" y="270.48" font-size="8.7" fill="#000" textLength="27.60" lengthAdjust="spacingAndGlyphs" font-weight="400" >xauusd.c</text>
<text class="u" x="1003.30" y="270.48" font-size="8.7" fill="#000" textLength="60.30" lengthAdjust="spacingAndGlyphs" font-weight="400" >2026.02.04 19:27:...</text>
<text class="u" x="1106.70" y="270.48" font-size="8.7" fill="#000" textLength="9.60" lengthAdjust="spacingAndGlyphs" text-anchor="end" font-weight="400" >sell</text>
<text class="u" x="1149.20" y="270.48" font-size="8.7" fill="#000" textLength="11.80" lengthAdjust="spacingAndGlyphs" text-anchor="end" font-weight="400" >0.01</text>
<text class="u" x="1192.60" y="270.48" font-size="8.7" fill="#000" textLength="24.40" lengthAdjust="spacingAndGlyphs" text-anchor="end" font-weight="400" >4892.40</text>
<text class="u" x="1268.20" y="270.48" font-size="8.7" fill="#000" textLength="24.40" lengthAdjust="spacingAndGlyphs" text-anchor="end" font-weight="400" >4892.52</text>
<line x1="1274.30" y1="264.75" x2="1278.10" y2="269.95" stroke="#808080" stroke-width="1.05" />
<line x1="1278.10" y1="264.75" x2="1274.30" y2="269.95" stroke="#808080" stroke-width="1.05" />
<text class="u" x="1321.80" y="270.48" font-size="8.7" fill="#000" textLength="24.40" lengthAdjust="spacingAndGlyphs" text-anchor="end" font-weight="400" >4900.47</text>
<text class="u" x="1360.90" y="270.48" font-size="8.7" fill="#f01818" textLength="14.90" lengthAdjust="spacingAndGlyphs" text-anchor="end" font-weight="400" >-8.07</text>
<line x1="1366.60" y1="264.75" x2="1370.40" y2="269.95" stroke="#808080" stroke-width="1.05" />
<line x1="1370.40" y1="264.75" x2="1366.60" y2="269.95" stroke="#808080" stroke-width="1.05" />
<rect x="948.00" y="276.90" width="4.6" height="9.4" rx="1" fill="#fff" stroke="#e04848" stroke-width="0.8"/>
<rect x="949.90" y="279.40" width="0.90" height="1.00" fill="#e04848" />
<rect x="949.90" y="281.60" width="0.90" height="1.00" fill="#e04848" />
<text class="u" x="956.50" y="284.93" font-size="8.7" fill="#000" textLength="27.60" lengthAdjust="spacingAndGlyphs" font-weight="400" >xauusd.c</text>
<text class="u" x="1003.30" y="284.93" font-size="8.7" fill="#000" textLength="60.30" lengthAdjust="spacingAndGlyphs" font-weight="400" >2026.02.04 19:27:...</text>
<text class="u" x="1106.70" y="284.93" font-size="8.7" fill="#000" textLength="9.60" lengthAdjust="spacingAndGlyphs" text-anchor="end" font-weight="400" >sell</text>
<text class="u" x="1149.20" y="284.93" font-size="8.7" fill="#000" textLength="11.80" lengthAdjust="spacingAndGlyphs" text-anchor="end" font-weight="400" >0.01</text>
<text class="u" x="1192.60" y="284.93" font-size="8.7" fill="#000" textLength="24.40" lengthAdjust="spacingAndGlyphs" text-anchor="end" font-weight="400" >4895.60</text>
<text class="u" x="1268.20" y="284.93" font-size="8.7" fill="#000" textLength="24.40" lengthAdjust="spacingAndGlyphs" text-anchor="end" font-weight="400" >4892.52</text>
<line x1="1274.30" y1="279.20" x2="1278.10" y2="284.40" stroke="#808080" stroke-width="1.05" />
<line x1="1278.10" y1="279.20" x2="1274.30" y2="284.40" stroke="#808080" stroke-width="1.05" />
<text class="u" x="1321.80" y="284.93" font-size="8.7" fill="#000" textLength="24.40" lengthAdjust="spacingAndGlyphs" text-anchor="end" font-weight="400" >4900.47</text>
<text class="u" x="1360.90" y="284.93" font-size="8.7" fill="#f01818" textLength="14.90" lengthAdjust="spacingAndGlyphs" text-anchor="end" font-weight="400" >-4.87</text>
<line x1="1366.60" y1="279.20" x2="1370.40" y2="284.40" stroke="#808080" stroke-width="1.05" />
<line x1="1370.40" y1="279.20" x2="1366.60" y2="284.40" stroke="#808080" stroke-width="1.05" />
<rect x="948.00" y="291.35" width="4.6" height="9.4" rx="1" fill="#fff" stroke="#e04848" stroke-width="0.8"/>
<rect x="949.90" y="293.85" width="0.90" height="1.00" fill="#e04848" />
<rect x="949.90" y="296.05" width="0.90" height="1.00" fill="#e04848" />
<text class="u" x="956.50" y="299.38" font-size="8.7" fill="#000" textLength="27.60" lengthAdjust="spacingAndGlyphs" font-weight="400" >xauusd.c</text>
<text class="u" x="1003.30" y="299.38" font-size="8.7" fill="#000" textLength="60.30" lengthAdjust="spacingAndGlyphs" font-weight="400" >2026.02.04 19:27:...</text>
<text class="u" x="1106.70" y="299.38" font-size="8.7" fill="#000" textLength="9.60" lengthAdjust="spacingAndGlyphs" text-anchor="end" font-weight="400" >sell</text>
<text class="u" x="1149.20" y="299.38" font-size="8.7" fill="#000" textLength="11.80" lengthAdjust="spacingAndGlyphs" text-anchor="end" font-weight="400" >0.01</text>
<text class="u" x="1192.60" y="299.38" font-size="8.7" fill="#000" textLength="24.40" lengthAdjust="spacingAndGlyphs" text-anchor="end" font-weight="400" >4898.14</text>
<text class="u" x="1268.20" y="299.38" font-size="8.7" fill="#000" textLength="24.40" lengthAdjust="spacingAndGlyphs" text-anchor="end" font-weight="400" >4892.52</text>
<line x1="1274.30" y1="293.65" x2="1278.10" y2="298.85" stroke="#808080" stroke-width="1.05" />
<line x1="1278.10" y1="293.65" x2="1274.30" y2="298.85" stroke="#808080" stroke-width="1.05" />
<text class="u" x="1321.80" y="299.38" font-size="8.7" fill="#000" textLength="24.40" lengthAdjust="spacingAndGlyphs" text-anchor="end" font-weight="400" >4900.47</text>
<text class="u" x="1360.90" y="299.38" font-size="8.7" fill="#f01818" textLength="14.90" lengthAdjust="spacingAndGlyphs" text-anchor="end" font-weight="400" >-2.33</text>
<line x1="1366.60" y1="293.65" x2="1370.40" y2="298.85" stroke="#808080" stroke-width="1.05" />
<line x1="1370.40" y1="293.65" x2="1366.60" y2="298.85" stroke="#808080" stroke-width="1.05" />
<rect x="948.00" y="305.80" width="4.6" height="9.4" rx="1" fill="#fff" stroke="#2c7bd0" stroke-width="0.8"/>
<rect x="949.90" y="308.30" width="0.90" height="1.00" fill="#2c7bd0" />
<rect x="949.90" y="310.50" width="0.90" height="1.00" fill="#2c7bd0" />
<text class="u" x="956.50" y="313.83" font-size="8.7" fill="#000" textLength="27.60" lengthAdjust="spacingAndGlyphs" font-weight="400" >xauusd.c</text>
<text class="u" x="1003.30" y="313.83" font-size="8.7" fill="#000" textLength="60.30" lengthAdjust="spacingAndGlyphs" font-weight="400" >2026.02.04 19:27:...</text>
<text class="u" x="1106.70" y="313.83" font-size="8.7" fill="#000" textLength="11.00" lengthAdjust="spacingAndGlyphs" text-anchor="end" font-weight="400" >buy</text>
<text class="u" x="1149.20" y="313.83" font-size="8.7" fill="#000" textLength="11.80" lengthAdjust="spacingAndGlyphs" text-anchor="end" font-weight="400" >0.01</text>
<text class="u" x="1192.60" y="313.83" font-size="8.7" fill="#000" textLength="24.40" lengthAdjust="spacingAndGlyphs" text-anchor="end" font-weight="400" >4900.51</text>
<text class="u" x="1268.20" y="313.83" font-size="8.7" fill="#000" textLength="24.40" lengthAdjust="spacingAndGlyphs" text-anchor="end" font-weight="400" >4902.01</text>
<line x1="1274.30" y1="308.10" x2="1278.10" y2="313.30" stroke="#808080" stroke-width="1.05" />
<line x1="1278.10" y1="308.10" x2="1274.30" y2="313.30" stroke="#808080" stroke-width="1.05" />
<text class="u" x="1321.80" y="313.83" font-size="8.7" fill="#000" textLength="24.40" lengthAdjust="spacingAndGlyphs" text-anchor="end" font-weight="400" >4900.08</text>
<text class="u" x="1360.90" y="313.83" font-size="8.7" fill="#f01818" textLength="14.90" lengthAdjust="spacingAndGlyphs" text-anchor="end" font-weight="400" >-0.43</text>
<line x1="1366.60" y1="308.10" x2="1370.40" y2="313.30" stroke="#808080" stroke-width="1.05" />
<line x1="1370.40" y1="308.10" x2="1366.60" y2="313.30" stroke="#808080" stroke-width="1.05" />
<ellipse cx="950.70" cy="325.05" rx="2.4" ry="3.1" fill="none" stroke="#333" stroke-width="0.7"/>
<line x1="949.40" y1="325.05" x2="952.00" y2="325.05" stroke="#333" stroke-width="0.7" />
<text class="u" x="956.70" y="328.18" font-size="8.7" fill="#000" textLength="321.00" lengthAdjust="spacingAndGlyphs" font-weight="700" >结余: 15 141.25 USC  净值: 15 115.00  预付款: 8.56  可用预付款: 15 106.44  预付款维持率: 176 577.10 %</text>
<text class="u" x="1361.30" y="328.18" font-size="8.7" fill="#000" textLength="19.10" lengthAdjust="spacingAndGlyphs" text-anchor="end" font-weight="700" >-26.25</text>
<ellipse cx="1368.50" cy="325.05" rx="3.9" ry="4.9" fill="#f2f2f2"/>
<line x1="1365.50" y1="325.05" x2="1371.50" y2="325.05" stroke="#1a1ae0" stroke-width="1.4" />
<line x1="1368.50" y1="321.35" x2="1368.50" y2="328.75" stroke="#1a1ae0" stroke-width="1.3" />
</g>
<rect x="0.00" y="0.00" width="1403.00" height="0.95" fill="#fdf8ee" />
</svg>
</body></html>
